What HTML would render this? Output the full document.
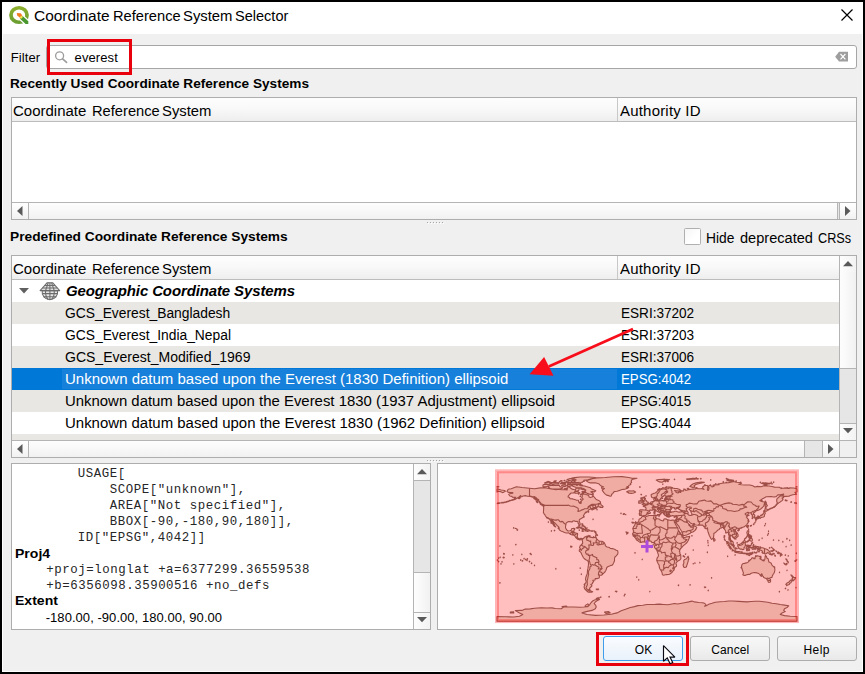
<!DOCTYPE html>
<html><head><meta charset="utf-8"><title>Coordinate Reference System Selector</title>
<style>
html,body{margin:0;padding:0;}
body{width:865px;height:674px;background:#000;position:relative;overflow:hidden;font-family:"Liberation Sans",sans-serif;color:#000;}
.abs,.t,div{position:absolute;box-sizing:border-box;}
.t{white-space:pre;line-height:40px;height:40px;display:block;}
.t .wd{position:static;display:inline-block;transform-origin:0 0;white-space:pre;}
.b{font-weight:bold;}
.m{font-family:"Liberation Mono",monospace;color:#262626;}
.w{color:#fff;}
.hdr{background:linear-gradient(#fdfdfd,#f9f9f9 45%,#eeeeee 100%);border-bottom:1px solid #bcbcbc;}
.sbtn{background:linear-gradient(#ffffff,#f2f2f2);}
.thumbh{background:linear-gradient(#fdfdfd,#f9f9f9 40%,#f1f1f1);}
.thumbv{background:linear-gradient(90deg,#fdfdfd,#f9f9f9 40%,#f1f1f1);}
.btn{border:1px solid #adadad;border-radius:3px;background:linear-gradient(#f7f7f7,#f1f1f1 50%,#e9e9e9);}
svg{position:absolute;overflow:visible;}
</style></head><body>

<div style="left:2px;top:2px;width:861px;height:670px;background:#fff;"></div>
<div style="left:3px;top:34px;width:859px;height:637px;background:#f0f0f0;"></div>
<svg style="left:0;top:0" width="40" height="34" viewBox="0 0 40 34">
<defs><linearGradient id="qg" x1="0" y1="0" x2="0" y2="1"><stop offset="0" stop-color="#8cae2c"/><stop offset="1" stop-color="#6c9f31"/></linearGradient></defs>
<ellipse cx="19" cy="15" rx="8.05" ry="7.25" fill="none" stroke="url(#qg)" stroke-width="3.7"/>
<path d="M21.5 17.5 L30 25.6" stroke="#fff" stroke-width="6.4" fill="none"/>
<path d="M19.8 18.4 L22.6 15.9 L28.3 21.2 L28.3 24.1 L25.6 24.1 Z" fill="#4a9830"/>
<path d="M16.8 13 L20.6 13.3 L22.4 15.6 L20.2 18 L17.2 15.4 Z" fill="#f07c22"/>
<path d="M21.4 15.6 L23 17.1 L21 18.9 L19.7 17.6 Z" fill="#f4e04a"/>
</svg>
<span class="t " style="left:33.5px;top:-4.34px;font-size:15.4px;"><span class="wd" style="transform:scaleX(1.0032);width:75.02px;">Coordinate</span> <span class="wd" style="transform:scaleX(0.9526);width:65.52px;">Reference</span> <span class="wd" style="transform:scaleX(0.9643);width:47.72px;">System</span> <span class="wd" style="transform:scaleX(0.9448);">Selector</span></span>
<svg style="left:840px;top:8px" width="14" height="14"><path d="M1.5 1.5 L12.5 12.5 M12.5 1.5 L1.5 12.5" stroke="#000" stroke-width="1.2" fill="none"/></svg>
<span class="t " style="left:10.8px;top:37.5px;font-size:13px;letter-spacing:0.1px;">Filter</span>
<div style="left:46px;top:45px;width:811px;height:24px;background:#fff;border:1px solid #a6a6a6;border-radius:3px;"></div>
<svg style="left:54px;top:50px" width="14" height="14"><circle cx="5.6" cy="5.8" r="4" fill="none" stroke="#9c9c9c" stroke-width="1.3"/><path d="M8.6 8.8 L12.6 12.4" stroke="#9c9c9c" stroke-width="1.6" stroke-linecap="round"/></svg>
<span class="t " style="left:74.6px;top:37.8px;font-size:13px;letter-spacing:0.1px;">everest</span>
<svg style="left:835px;top:51px" width="14" height="11"><path d="M4 0.8 H13 V10.6 H4 L0.2 5.7 Z" fill="#9e9e9e"/><path d="M5.5 3 L10.4 8.4 M10.4 3 L5.5 8.4" stroke="#fff" stroke-width="1.15"/></svg>
<div style="left:47px;top:39px;width:85px;height:36px;border:3px solid #e8000c;"></div>
<span class="t b" style="left:10.3px;top:64.34px;font-size:12px;transform:scaleX(1.135);transform-origin:0 0;">Recently Used Coordinate Reference Systems</span>
<div style="left:11px;top:97px;width:846px;height:123px;background:#fff;border:1px solid #adadad;"></div>
<div class="hdr" style="left:12px;top:98px;width:844px;height:24px;"></div>
<div style="left:617px;top:98px;width:1px;height:23px;background:#c8c8c8;"></div>
<span class="t " style="left:13.4px;top:90.96px;font-size:15.4px;"><span class="wd" style="transform:scaleX(0.974);width:73.92px;">Coordinate</span> <span class="wd" style="transform:scaleX(0.9545);width:65.72px;">Reference</span> <span class="wd" style="transform:scaleX(0.9643);">System</span></span>
<span class="t " style="left:620px;top:90.96px;font-size:15.4px;letter-spacing:0.205px;transform:scaleX(0.974);transform-origin:0 0;">Authority ID</span>
<div style="left:12px;top:202px;width:844px;height:17px;background:#e6e6e6;border-top:1px solid #b4b4b4;"></div><div class="sbtn" style="left:12px;top:203px;width:17px;height:16px;border-right:1px solid #b4b4b4;"></div><div class="thumbh" style="left:29px;top:203px;width:809px;height:16px;border-right:1px solid #b4b4b4;"></div><div class="sbtn" style="left:839px;top:203px;width:17px;height:16px;border-left:1px solid #b4b4b4;"></div><svg style="left:17px;top:206px" width="6" height="10"><path d="M5.5 0 V10 L0 5 Z" fill="#5a5a5a"/></svg>
<svg style="left:845px;top:205.7px" width="6" height="10"><path d="M0 0 V10 L5.5 5 Z" fill="#5a5a5a"/></svg>
<span class="t b" style="left:10.3px;top:217.34px;font-size:12px;transform:scaleX(1.144);transform-origin:0 0;">Predefined Coordinate Reference Systems</span>
<div style="left:684px;top:228px;width:17px;height:17px;background:linear-gradient(135deg,#f6f6f6,#ffffff 60%);border:1px solid #b0b0b0;border-radius:1.5px;"></div>
<span class="t " style="left:706.3px;top:218.16px;font-size:15.4px;"><span class="wd" style="transform:scaleX(0.8961);width:29.52px;">Hide</span> <span class="wd" style="transform:scaleX(0.9477);width:73.42px;">deprecated</span> <span class="wd" style="transform:scaleX(0.8231);">CRSs</span></span>
<div style="left:11px;top:255px;width:846px;height:203px;background:#fff;border:1px solid #adadad;"></div>
<div class="hdr" style="left:12px;top:256px;width:827px;height:24px;"></div>
<div style="left:617px;top:256px;width:1px;height:23px;background:#c8c8c8;"></div>
<span class="t " style="left:13.4px;top:248.96px;font-size:15.4px;"><span class="wd" style="transform:scaleX(0.974);width:73.92px;">Coordinate</span> <span class="wd" style="transform:scaleX(0.9545);width:65.72px;">Reference</span> <span class="wd" style="transform:scaleX(0.9643);">System</span></span>
<span class="t " style="left:620px;top:248.96px;font-size:15.4px;letter-spacing:0.205px;transform:scaleX(0.974);transform-origin:0 0;">Authority ID</span>
<div style="left:12px;top:302px;width:827px;height:22px;background:#e9e7e3;"></div>
<div style="left:12px;top:346px;width:827px;height:22px;background:#e9e7e3;"></div>
<div style="left:12px;top:368px;width:827px;height:22px;background:#0078d7;"></div>
<div style="left:62px;top:369px;width:555px;height:20px;background:#1780da;"></div>
<div style="left:12px;top:390px;width:827px;height:22px;background:#e9e7e3;"></div>
<div style="left:12px;top:434px;width:827px;height:6px;background:#e9e7e3;"></div>
<svg style="left:19px;top:288px" width="11" height="6"><path d="M0 0 H10 L5 5.5 Z" fill="#606060"/></svg>
<svg style="left:39px;top:282px" width="22" height="19" viewBox="0 0 22 19">
<g fill="none" stroke="#6c6c6c" stroke-width="1.05" stroke-linejoin="round">
<path d="M3.2 8.6 A7.8 7.8 0 1 0 18.6 8.6 Z" fill="#e6e6e6"/>
<path d="M8.2 0.7 H13.6 L20.7 8.6 H1.1 Z" fill="#dedede"/>
<path d="M10.9 0.7 V17.8 M9.2 0.7 L6.6 8.6 Q6 13.8 9.2 17.6 M12.6 0.7 L15.2 8.6 Q15.8 13.8 12.6 17.6 M5.8 3.4 H16 M3.6 6 H18.2 M3.3 11.6 H18.5 M4.6 14.7 H17.2"/>
</g></svg>
<span class="t b" style="left:66px;top:270.66px;font-size:15.4px;letter-spacing:-0.123px;transform:scaleX(0.974);transform-origin:0 0;font-style:italic;">Geographic Coordinate Systems</span>
<span class="t " style="left:64.5px;top:293.16px;font-size:15.4px;transform:scaleX(0.8981);transform-origin:0 0;">GCS_Everest_Bangladesh</span>
<span class="t " style="left:621px;top:293.16px;font-size:15.4px;transform:scaleX(0.8815);transform-origin:0 0;">ESRI:37202</span>
<span class="t " style="left:64.5px;top:315.16px;font-size:15.4px;transform:scaleX(0.8981);transform-origin:0 0;">GCS_Everest_India_Nepal</span>
<span class="t " style="left:621px;top:315.16px;font-size:15.4px;transform:scaleX(0.8815);transform-origin:0 0;">ESRI:37203</span>
<span class="t " style="left:64.5px;top:337.16px;font-size:15.4px;transform:scaleX(0.9107);transform-origin:0 0;">GCS_Everest_Modified_1969</span>
<span class="t " style="left:621px;top:337.16px;font-size:15.4px;transform:scaleX(0.8815);transform-origin:0 0;">ESRI:37006</span>
<span class="t w" style="left:64.5px;top:359.16px;font-size:15.4px;transform:scaleX(0.974);transform-origin:0 0;">Unknown datum based upon the Everest (1830 Definition) ellipsoid</span>
<span class="t w" style="left:621px;top:359.16px;font-size:15.4px;transform:scaleX(0.862);transform-origin:0 0;">EPSG:4042</span>
<span class="t " style="left:64.5px;top:381.16px;font-size:15.4px;transform:scaleX(0.9692);transform-origin:0 0;">Unknown datum based upon the Everest 1830 (1937 Adjustment) ellipsoid</span>
<span class="t " style="left:621px;top:381.16px;font-size:15.4px;transform:scaleX(0.862);transform-origin:0 0;">EPSG:4015</span>
<span class="t " style="left:64.5px;top:403.16px;font-size:15.4px;transform:scaleX(0.9721);transform-origin:0 0;">Unknown datum based upon the Everest 1830 (1962 Definition) ellipsoid</span>
<span class="t " style="left:621px;top:403.16px;font-size:15.4px;transform:scaleX(0.862);transform-origin:0 0;">EPSG:4044</span>
<div style="left:839px;top:256px;width:17px;height:184px;background:#e6e6e6;border-left:1px solid #b4b4b4;"></div><div class="thumbv" style="left:840px;top:256px;width:16px;height:17px;border-bottom:1px solid #b4b4b4;background:linear-gradient(90deg,#fdfdfd,#f3f3f3)"></div><div class="thumbv" style="left:840px;top:272px;width:16px;height:97px;border-bottom:1px solid #b4b4b4;"></div><div class="thumbv" style="left:840px;top:423px;width:16px;height:17px;border-top:1px solid #b4b4b4;background:linear-gradient(90deg,#fdfdfd,#f3f3f3)"></div><svg style="left:842.6px;top:260.7px" width="10" height="6"><path d="M0 5.2 H10 L5 0 Z" fill="#595959"/></svg><svg style="left:842.6px;top:428.2px" width="10" height="6"><path d="M0 0 H10 L5 5.2 Z" fill="#595959"/></svg>
<div style="left:12px;top:440px;width:844px;height:17px;background:#e6e6e6;border-top:1px solid #b4b4b4;"></div><div class="sbtn" style="left:12px;top:441px;width:17px;height:16px;border-right:1px solid #b4b4b4;"></div><div class="thumbh" style="left:29px;top:441px;width:776px;height:16px;border-right:1px solid #b4b4b4;"></div><div class="sbtn" style="left:822px;top:441px;width:34px;height:16px;border-left:1px solid #b4b4b4;"></div><svg style="left:17px;top:444px" width="6" height="10"><path d="M5.5 0 V10 L0 5 Z" fill="#5a5a5a"/></svg>
<svg style="left:828px;top:444px" width="6" height="10"><path d="M0 0 V10 L5.5 5 Z" fill="#5a5a5a"/></svg>
<div style="left:839px;top:440px;width:17px;height:17px;background:#f0f0f0;border-left:1px solid #b4b4b4;border-top:1px solid #b4b4b4;"></div>
<svg style="left:0;top:0" width="865" height="674"><path d="M633 329 L548.8 366.4" stroke="#f80d1a" stroke-width="2.7" fill="none"/><path d="M529.6 374.2 L544.1 356.9 L553.5 375.8 Z" fill="#f80d1a"/></svg>
<div style="left:427px;top:460px;width:1px;height:1px;background:#a6a6a6;"></div><div style="left:428px;top:461px;width:1px;height:1px;background:#fff;"></div>
<div style="left:430px;top:460px;width:1px;height:1px;background:#a6a6a6;"></div><div style="left:431px;top:461px;width:1px;height:1px;background:#fff;"></div>
<div style="left:433px;top:460px;width:1px;height:1px;background:#a6a6a6;"></div><div style="left:434px;top:461px;width:1px;height:1px;background:#fff;"></div>
<div style="left:436px;top:460px;width:1px;height:1px;background:#a6a6a6;"></div><div style="left:437px;top:461px;width:1px;height:1px;background:#fff;"></div>
<div style="left:439px;top:460px;width:1px;height:1px;background:#a6a6a6;"></div><div style="left:440px;top:461px;width:1px;height:1px;background:#fff;"></div>
<div style="left:442px;top:460px;width:1px;height:1px;background:#a6a6a6;"></div><div style="left:443px;top:461px;width:1px;height:1px;background:#fff;"></div>
<div style="left:427px;top:222px;width:1px;height:1px;background:#a6a6a6;"></div><div style="left:428px;top:223px;width:1px;height:1px;background:#fff;"></div>
<div style="left:430px;top:222px;width:1px;height:1px;background:#a6a6a6;"></div><div style="left:431px;top:223px;width:1px;height:1px;background:#fff;"></div>
<div style="left:433px;top:222px;width:1px;height:1px;background:#a6a6a6;"></div><div style="left:434px;top:223px;width:1px;height:1px;background:#fff;"></div>
<div style="left:436px;top:222px;width:1px;height:1px;background:#a6a6a6;"></div><div style="left:437px;top:223px;width:1px;height:1px;background:#fff;"></div>
<div style="left:439px;top:222px;width:1px;height:1px;background:#a6a6a6;"></div><div style="left:440px;top:223px;width:1px;height:1px;background:#fff;"></div>
<div style="left:442px;top:222px;width:1px;height:1px;background:#a6a6a6;"></div><div style="left:443px;top:223px;width:1px;height:1px;background:#fff;"></div>
<div style="left:11px;top:463px;width:420px;height:167px;background:#fff;border:1px solid #adadad;"></div>
<span class="t m" style="left:13.8px;top:454.1px;font-size:12.4px;letter-spacing:0.56px;">        USAGE[</span>
<span class="t m" style="left:13.8px;top:469.7px;font-size:12.4px;letter-spacing:0.56px;">            SCOPE[&quot;unknown&quot;],</span>
<span class="t m" style="left:13.8px;top:485.7px;font-size:12.4px;letter-spacing:0.56px;">            AREA[&quot;Not specified&quot;],</span>
<span class="t m" style="left:13.8px;top:501.7px;font-size:12.4px;letter-spacing:0.56px;">            BBOX[-90,-180,90,180]],</span>
<span class="t m" style="left:13.8px;top:517.7px;font-size:12.4px;letter-spacing:0.56px;">        ID[&quot;EPSG&quot;,4042]]</span>
<span class="t b" style="left:15.3px;top:533.64px;font-size:12px;transform:scaleX(1.17);transform-origin:0 0;">Proj4</span>
<span class="t m" style="left:46.2px;top:549.7px;font-size:12.4px;letter-spacing:0.56px;">+proj=longlat +a=6377299.36559538</span>
<span class="t m" style="left:46.2px;top:565.7px;font-size:12.4px;letter-spacing:0.56px;">+b=6356098.35900516 +no_defs</span>
<span class="t b" style="left:15.3px;top:581.44px;font-size:12px;transform:scaleX(1.17);transform-origin:0 0;">Extent</span>
<span class="t " style="left:45.7px;top:597.8px;font-size:13px;letter-spacing:0.05px;">-180.00, -90.00, 180.00, 90.00</span>
<div style="left:413px;top:464px;width:17px;height:165px;background:#e6e6e6;border-left:1px solid #b4b4b4;"></div><div class="thumbv" style="left:414px;top:464px;width:16px;height:17px;border-bottom:1px solid #b4b4b4;background:linear-gradient(90deg,#fdfdfd,#f3f3f3)"></div><div class="thumbv" style="left:414px;top:572px;width:16px;height:40px;border-top:1px solid #b4b4b4;"></div><div class="thumbv" style="left:414px;top:612px;width:16px;height:17px;border-top:1px solid #b4b4b4;background:linear-gradient(90deg,#fdfdfd,#f3f3f3)"></div><svg style="left:416.6px;top:468.7px" width="10" height="6"><path d="M0 5.2 H10 L5 0 Z" fill="#595959"/></svg><svg style="left:416.6px;top:617.4px" width="10" height="6"><path d="M0 0 H10 L5 5.2 Z" fill="#595959"/></svg>
<div style="left:437px;top:463px;width:420px;height:167px;background:#fff;border:1px solid #adadad;"></div>
<svg style="left:0;top:0" width="865" height="674" viewBox="0 0 865 674">
<rect x="497" y="471.3" width="300" height="149.8" fill="#ffbfbf"/>
<g id="world" stroke-linejoin="round">
<path d="M507.0,491.5 508.2,489.3 511.2,488.7 516.5,486.8 522.0,487.5 529.5,488.2 534.5,488.7 540.3,487.9 542.8,487.9 546.2,488.0 551.2,488.9 556.2,489.7 557.0,489.1 562.0,489.7 565.3,489.5 567.0,490.1 567.4,488.7 568.2,486.3 569.9,487.5 570.8,488.3 572.0,489.1 573.7,489.5 575.3,490.0 576.2,488.0 578.7,488.1 579.2,489.1 578.7,490.4 577.0,491.0 575.3,491.2 574.5,492.0 573.7,492.9 571.2,493.0 569.5,494.5 568.2,496.2 568.1,497.2 569.5,497.3 569.9,498.7 572.8,498.9 576.2,500.1 578.4,500.3 578.7,502.0 579.9,503.5 581.2,503.3 581.2,501.2 583.2,499.1 581.6,497.3 582.4,496.2 582.0,494.2 585.3,494.3 588.7,495.4 589.1,497.0 590.3,497.5 592.0,497.0 593.2,496.0 594.9,497.9 596.2,499.5 598.7,500.5 600.3,501.6 600.6,502.9 598.7,503.5 597.0,504.3 593.7,504.4 591.6,504.4 589.5,505.8 587.8,507.1 590.3,505.8 592.8,505.2 593.4,505.5 592.8,506.4 593.0,507.5 594.1,507.9 595.8,508.1 596.2,508.5 594.1,509.0 592.0,510.0 591.8,509.1 593.2,508.5 591.2,508.6 589.5,509.4 588.5,509.9 588.1,510.8 588.7,511.5 587.4,511.8 585.3,512.4 585.2,513.3 584.4,513.9 583.8,515.2 583.4,515.4 583.7,517.0 582.8,517.5 582.0,518.0 580.8,518.7 579.5,519.5 579.2,520.8 579.9,522.9 580.3,524.1 580.0,525.2 579.3,525.2 578.7,524.1 578.0,522.9 578.0,521.9 577.0,521.2 575.8,521.5 574.5,520.9 572.8,521.0 572.4,521.9 571.2,521.9 569.1,521.5 567.8,521.9 566.2,523.0 565.9,524.5 565.6,526.2 565.5,527.6 566.0,528.9 567.0,530.2 568.1,531.0 569.9,530.7 571.2,530.4 571.6,528.7 573.7,528.3 574.7,528.5 574.1,530.0 573.8,531.0 573.4,532.0 573.0,533.0 574.1,533.0 575.3,533.0 577.0,533.2 577.7,533.7 577.4,535.4 577.2,537.0 577.8,537.9 578.7,538.7 579.5,538.9 580.8,538.2 582.0,538.5 582.6,539.0 582.1,540.2 581.6,539.3 580.8,538.8 580.1,540.0 579.1,539.8 577.8,539.3 577.2,538.7 576.2,538.0 575.5,537.1 574.5,535.5 573.9,535.1 572.4,535.0 570.8,534.5 570.1,534.0 568.7,532.8 567.4,533.0 566.2,533.0 564.5,532.4 562.4,531.6 560.8,530.9 559.5,530.0 559.1,529.1 559.2,528.3 558.7,527.0 557.0,525.4 555.9,524.1 554.9,523.0 553.7,522.1 552.8,520.4 551.3,519.7 551.6,520.8 552.8,522.5 554.1,524.1 555.1,526.0 555.8,527.0 555.1,526.8 553.7,525.6 553.2,524.3 551.8,523.3 551.6,522.0 550.6,521.0 549.7,519.5 549.2,518.7 548.2,517.9 546.5,517.4 545.4,515.7 544.9,514.8 543.8,513.3 543.4,512.5 543.5,511.2 543.6,509.5 543.7,507.7 543.1,505.9 544.5,505.8 544.7,505.2 543.2,504.5 541.2,503.7 540.3,502.5 538.7,501.0 537.4,500.0 535.8,498.3 534.1,497.2 532.4,497.0 530.3,496.4 527.4,496.2 525.3,495.6 523.2,496.0 522.0,496.6 520.3,497.0 520.8,495.5 519.9,496.2 518.7,497.2 516.6,498.5 514.9,499.5 512.8,500.2 510.8,500.5 512.0,499.8 513.7,499.3 515.3,498.0 515.8,497.3 514.5,497.4 512.4,497.2 512.0,496.4 509.9,496.0 509.1,495.0 508.7,494.4 509.7,493.7 512.8,493.3 512.8,492.5 511.2,492.5 508.7,492.4ZM592.0,494.6 587.8,493.8 585.8,492.5 582.4,492.6 582.0,491.6 585.3,491.6 585.8,490.0 584.5,489.1 581.6,487.9 578.7,487.9 576.2,487.5 572.8,486.2 572.0,484.8 576.2,484.8 579.5,484.8 580.3,485.8 584.5,486.0 587.8,487.0 590.3,487.7 591.2,488.7 595.3,490.4 595.8,490.7 594.1,492.0 592.8,491.4 590.8,491.8 593.2,493.5ZM562.4,488.3 559.5,489.1 555.3,489.0 550.3,488.7 548.2,486.8 549.5,485.5 552.0,485.1 555.3,485.5 559.1,485.1 559.9,486.6 562.8,487.5ZM542.8,486.2 544.1,486.9 546.2,486.7 548.7,485.8 550.8,485.1 549.1,484.4 545.8,484.1 543.2,484.7ZM582.4,482.5 580.3,482.7 572.4,482.5 575.3,481.2 574.1,480.8 576.2,480.0 574.9,479.1 571.2,478.3 574.5,477.6 580.3,477.0 588.7,477.0 595.3,477.5 595.8,478.0 591.2,478.7 587.8,479.7 583.7,480.4 584.5,481.2 582.0,482.0ZM567.0,479.5 571.2,481.0 574.1,480.0 570.3,478.5ZM570.8,484.0 580.3,484.0 580.8,483.3 578.7,482.6 572.8,482.6 569.5,482.2 566.6,482.1 569.9,483.1ZM567.4,486.1 570.3,486.2 572.0,485.4 571.2,484.5 567.4,484.6ZM561.6,485.5 564.5,486.8 566.6,485.8 565.3,484.7 562.8,485.0ZM549.5,483.3 552.8,484.2 558.7,483.7 558.7,482.9 555.3,482.5 552.0,482.6 549.5,482.8ZM560.3,483.7 565.3,483.7 565.8,482.6 562.0,482.2ZM544.5,482.9 550.3,482.0 547.8,481.4ZM574.5,491.8 577.0,491.3 579.9,492.9 578.7,493.2 574.9,493.2ZM564.1,488.7 567.0,488.0 567.4,489.0 565.3,489.0ZM597.6,506.5 600.3,507.1 602.8,507.4 603.1,506.5 602.4,505.8 601.2,505.1 600.5,503.3 599.1,504.1 598.2,505.4ZM540.1,503.9 542.8,504.5 544.2,505.9 542.8,505.7 540.8,504.5ZM536.2,501.1 537.2,501.2 537.7,502.7 536.6,502.0ZM576.2,528.0 577.8,527.0 579.9,527.0 582.8,528.3 585.2,529.4 582.4,529.6 582.0,529.0 580.8,528.1 578.7,527.5 577.0,528.0ZM584.9,530.9 586.3,529.6 588.8,529.8 590.0,530.7 588.7,531.0 587.4,531.5 586.6,531.0ZM581.8,531.0 582.8,530.8 583.5,531.2 582.4,531.4ZM591.0,530.9 592.2,530.9 592.2,531.2 591.0,531.2ZM586.2,480.8 590.3,479.5 592.0,478.7 597.0,477.9 605.3,477.5 613.7,476.7 622.0,476.6 628.7,477.5 632.0,478.3 637.0,478.3 632.0,479.5 631.2,481.2 631.6,482.5 630.3,483.7 630.8,484.5 628.7,485.4 628.7,486.2 627.0,486.6 628.7,487.5 626.2,487.9 627.8,488.3 625.3,489.1 622.0,489.5 619.5,490.4 617.0,491.3 614.1,491.6 612.8,493.3 611.6,494.5 611.2,496.0 609.9,496.3 608.7,495.6 606.6,495.1 605.3,494.1 604.1,492.9 602.8,491.2 602.2,490.0 604.5,488.5 601.6,488.3 601.6,487.3 603.7,487.0 600.8,485.8 598.7,483.7 595.3,482.7 590.3,482.9 587.8,481.9ZM626.8,491.5 628.7,490.9 632.0,491.0 633.7,490.8 634.9,491.6 635.6,492.0 633.7,493.0 631.2,493.4 628.2,493.0 628.7,492.5 627.0,492.1ZM517.0,529.4 517.8,529.7 517.3,530.4 517.0,529.9ZM515.2,528.2 515.6,528.4 515.3,528.5ZM516.4,528.7 517.0,528.9 516.7,529.0ZM582.6,539.0 583.7,538.5 584.1,537.5 584.9,537.0 586.6,536.2 587.4,535.9 587.4,537.0 587.0,537.9 587.8,537.2 588.7,536.1 589.9,537.2 592.0,537.4 593.2,537.7 595.3,537.3 596.2,538.0 597.0,539.1 598.2,540.4 599.5,541.2 601.2,541.3 602.8,541.6 604.1,542.5 605.3,544.7 605.3,545.8 606.6,546.6 607.0,547.0 609.5,547.5 610.3,548.5 612.4,548.6 614.5,549.3 616.2,550.2 617.7,550.8 618.0,552.5 617.7,554.1 616.2,555.8 614.9,557.0 614.5,558.7 614.5,560.8 613.8,562.5 613.0,564.1 612.2,565.3 610.8,565.4 609.5,566.0 608.2,566.5 606.8,567.5 606.4,569.1 605.8,570.4 604.9,572.0 603.7,573.1 602.4,574.5 601.3,575.3 599.9,575.3 598.4,574.5 599.3,576.2 599.5,577.0 599.0,578.0 597.0,578.6 595.2,578.6 595.1,580.0 592.8,580.4 593.7,581.6 592.7,582.5 592.4,583.7 590.8,584.5 592.0,585.8 590.8,587.0 589.5,588.3 590.0,589.8 588.7,590.0 587.8,591.0 587.0,590.8 585.8,590.0 584.5,588.7 584.1,586.6 584.9,585.0 584.1,584.5 585.8,582.9 586.2,581.2 585.5,579.5 585.8,577.5 586.4,575.8 587.2,574.1 587.4,572.0 587.5,570.4 587.9,568.7 588.2,566.6 588.5,564.5 588.4,562.5 588.3,561.5 587.4,560.6 585.8,559.8 584.1,558.5 583.3,557.5 582.7,556.2 581.8,554.5 581.2,553.0 580.4,551.9 579.4,551.2 579.2,550.0 580.1,549.0 580.3,548.3 579.5,548.0 579.7,547.0 580.2,546.0 580.3,545.4 581.2,545.0 581.6,544.1 582.4,544.0 582.7,542.9 582.5,541.6 582.4,540.6 582.1,540.2ZM589.8,590.0 590.2,590.8 592.7,591.8 591.6,592.1 589.9,592.3 588.7,592.2 587.0,591.4 588.2,591.0 588.4,590.2ZM596.2,589.1 598.7,589.0 598.2,589.7 596.6,589.7ZM595.5,537.3 596.2,537.3 596.2,537.8 595.5,537.8ZM642.1,516.4 642.6,516.3 644.5,516.8 645.3,517.0 647.0,516.3 648.2,515.8 649.5,515.5 651.2,515.5 653.2,515.4 655.2,515.1 656.2,515.4 655.8,516.0 655.9,516.6 655.3,517.9 655.5,518.0 656.3,518.5 657.8,518.8 659.7,519.3 660.1,520.0 661.6,520.5 663.0,521.0 663.7,520.4 663.8,519.3 664.9,518.8 666.3,519.1 667.8,519.9 669.9,520.2 671.2,520.5 672.0,520.1 673.2,520.0 673.9,520.2 675.5,520.1 676.1,521.6 675.7,522.9 674.9,522.6 674.2,521.3 674.2,522.0 674.9,523.0 675.3,524.0 676.2,525.5 676.8,526.6 677.8,527.9 678.1,528.7 678.0,530.0 679.1,531.2 679.9,533.3 681.2,534.1 682.4,535.4 683.1,535.8 682.8,536.6 683.7,537.5 684.9,537.5 686.2,536.9 687.8,536.8 689.7,536.4 689.5,537.5 688.9,538.7 688.1,540.8 687.0,542.5 685.3,544.1 683.7,545.4 682.4,546.6 681.6,547.7 680.5,548.5 680.1,549.7 679.3,551.2 679.9,552.0 679.8,553.7 680.7,554.9 680.8,556.6 680.9,558.7 679.9,560.0 677.8,561.0 676.2,562.7 675.9,563.7 676.6,565.0 676.4,566.2 674.9,567.2 674.3,567.9 674.4,568.7 674.0,570.0 672.8,571.2 672.0,572.5 670.6,573.5 669.5,574.3 668.4,574.5 666.6,574.6 665.3,574.7 663.7,575.2 662.4,574.8 662.2,573.5 662.0,572.5 661.2,570.8 660.7,570.0 659.7,568.5 659.3,567.0 659.1,565.1 658.2,563.7 657.4,562.0 656.8,560.6 656.8,559.5 657.2,557.9 658.2,556.5 658.5,555.2 658.0,553.7 657.2,551.3 657.0,550.4 656.2,549.4 655.1,548.1 654.3,546.9 654.8,545.8 655.2,544.1 655.0,543.3 654.4,542.5 652.8,542.5 652.0,542.6 651.2,541.5 650.6,541.0 649.2,540.9 648.0,541.1 646.6,541.7 645.3,542.2 644.3,542.0 642.8,541.9 640.8,542.5 639.3,541.9 638.0,540.9 637.4,540.5 636.6,540.0 636.0,539.1 635.8,538.3 634.8,537.3 634.5,537.0 634.1,536.3 633.1,535.9 633.0,535.0 632.4,534.0 633.2,532.9 633.4,531.6 633.6,530.4 633.2,530.0 632.8,528.7 633.2,527.6 633.7,526.5 634.6,525.6 634.9,524.5 636.0,523.1 637.4,522.5 638.7,521.6 638.9,520.8 638.8,520.0 639.3,519.1 640.8,518.2 641.4,517.7ZM688.1,556.2 688.9,559.0 688.3,559.5 688.2,561.2 687.4,563.7 686.3,567.0 684.7,567.5 683.7,567.0 683.1,565.0 683.9,562.9 683.7,560.8 684.5,559.5 685.6,559.3 686.8,558.3 687.7,556.8ZM632.9,522.5 633.6,522.4 633.3,522.9ZM633.8,522.8 634.2,522.8 634.1,523.1ZM635.1,522.4 635.5,522.3 635.3,522.8ZM693.1,563.6 693.5,563.8 693.2,564.0ZM694.8,562.9 695.2,563.0 694.9,563.3ZM691.4,535.7 692.4,535.7 692.0,536.0ZM683.1,555.8 683.2,556.1 683.0,556.1ZM627.2,533.5 627.5,533.5 627.4,533.8ZM625.9,532.0 626.2,532.0 626.1,532.2ZM625.5,514.6 626.0,514.7 625.8,514.8ZM632.7,518.9 633.1,518.9 632.9,519.0ZM675.5,520.1 676.1,518.9 676.6,518.0 676.9,516.6 677.2,515.7 676.2,515.6 674.9,516.1 673.7,515.8 672.5,515.5 671.6,516.0 670.3,515.6 669.8,515.4 668.9,514.3 669.3,513.4 668.8,512.9 669.9,512.5 671.2,512.5 671.2,512.0 673.2,511.9 674.9,511.2 676.2,511.2 677.4,511.8 679.1,512.1 680.3,512.0 681.6,511.6 681.6,510.8 680.3,510.0 679.1,509.2 678.2,508.7 678.8,507.9 679.7,507.0 678.2,507.2 676.4,507.6 676.2,508.1 677.4,508.5 676.4,508.7 675.3,509.2 674.8,509.0 674.2,508.4 675.0,507.8 674.1,507.8 673.2,507.4 672.6,507.5 671.8,508.5 670.8,509.5 670.3,510.1 670.2,510.8 670.3,511.3 671.2,511.9 670.3,512.0 669.5,512.4 668.8,512.6 668.7,512.2 667.4,512.1 666.8,512.7 666.0,512.5 665.9,513.3 666.4,513.9 667.0,514.5 666.2,514.6 666.3,515.8 665.6,515.8 665.1,515.5 664.7,514.5 664.5,513.7 663.7,513.1 663.2,512.5 663.2,511.5 662.4,510.8 661.2,510.3 659.9,509.5 659.1,508.5 658.4,508.5 658.4,508.1 657.2,508.5 657.3,509.3 658.3,510.0 658.8,510.9 660.3,511.3 662.4,512.7 661.2,512.5 660.8,513.1 661.2,513.7 660.8,514.1 660.1,514.5 660.3,513.9 660.1,512.9 659.1,512.3 657.8,511.8 657.2,511.4 656.2,510.8 655.6,510.0 654.9,509.3 654.3,509.2 653.2,509.7 652.2,510.3 651.0,510.0 649.9,510.1 649.5,510.8 649.7,511.3 648.8,511.7 647.7,512.2 646.8,513.3 647.2,513.9 646.4,514.8 645.3,515.5 643.3,515.6 642.5,516.1 641.8,515.7 640.8,515.2 639.6,515.4 639.7,514.1 639.1,513.9 639.6,512.7 639.8,511.6 639.3,510.4 640.3,509.8 642.4,509.9 644.1,510.0 645.5,510.0 646.0,509.0 646.1,508.2 645.2,507.0 643.4,506.4 643.1,505.9 644.5,505.5 645.7,505.6 645.5,504.8 647.1,505.0 648.2,504.4 648.4,503.8 649.9,503.4 650.5,502.8 651.0,502.0 652.0,501.7 653.0,501.5 654.2,501.5 654.2,500.9 653.8,499.9 653.8,498.7 655.8,498.1 655.6,499.1 655.3,500.0 655.2,500.5 656.2,500.9 657.4,500.9 658.8,501.3 660.8,500.8 662.4,500.6 663.5,500.9 664.5,500.0 664.5,498.7 665.8,498.2 667.2,498.5 666.6,497.5 666.6,496.9 667.8,496.6 670.3,496.5 672.2,496.3 670.8,495.8 668.7,495.9 666.2,496.3 664.8,495.5 664.9,494.1 665.8,493.2 667.8,492.0 667.2,491.4 665.3,491.6 664.5,492.7 662.4,493.9 661.3,495.0 661.6,495.8 662.7,496.4 662.0,497.0 660.8,498.3 660.3,499.4 658.9,500.0 657.8,500.0 657.4,499.1 656.8,498.1 656.2,497.0 654.9,497.2 653.7,497.8 652.4,497.8 651.6,497.0 651.2,495.8 651.2,494.5 652.4,493.9 654.1,493.3 655.3,492.9 656.6,492.0 657.4,491.0 658.7,490.0 659.9,489.3 661.6,488.5 662.8,488.0 664.9,487.7 666.6,487.2 668.5,487.0 670.3,487.0 672.4,487.6 672.8,488.0 674.5,488.4 677.0,488.5 679.1,489.3 681.0,490.4 681.3,490.8 679.5,491.1 676.2,490.7 674.5,490.5 675.8,491.4 676.2,492.5 678.2,493.0 678.5,492.0 680.8,492.4 680.3,491.4 682.4,490.9 683.7,491.0 683.9,489.7 683.7,489.1 685.3,489.4 685.8,490.5 687.4,489.9 691.2,489.3 692.8,489.1 695.3,488.9 697.4,488.1 697.8,488.8 700.8,488.8 702.0,488.6 702.8,488.9 704.1,489.4 702.7,488.3 702.7,487.0 704.5,485.5 707.4,485.5 707.8,486.6 707.7,488.7 707.4,490.0 708.2,490.5 708.7,489.5 709.1,487.9 708.2,486.6 709.1,485.5 711.6,486.0 712.0,487.0 714.1,486.2 714.1,484.9 719.1,484.6 719.5,483.7 723.7,483.0 728.7,482.6 733.9,481.5 736.2,482.2 740.3,482.5 741.6,483.3 738.7,484.3 741.2,484.8 745.3,485.0 749.9,485.0 752.8,485.8 754.9,487.0 757.4,486.4 761.2,486.7 763.7,485.8 768.7,486.0 772.0,486.5 774.5,487.1 779.5,487.3 780.8,488.2 783.7,488.1 787.0,487.9 789.1,488.6 789.5,487.9 793.7,488.0 797.0,488.8 797.0,492.0 794.9,492.3 796.6,494.3 792.8,494.7 790.3,495.5 788.9,496.3 785.3,496.4 783.1,496.4 783.1,497.9 782.0,498.0 783.0,499.5 782.4,500.4 780.3,501.9 779.1,502.6 777.6,503.7 776.7,501.2 776.8,499.1 777.8,498.0 780.3,495.8 781.9,495.9 783.4,495.0 783.7,494.1 780.3,494.7 777.8,494.9 776.2,496.6 773.7,497.0 771.2,496.5 766.2,496.8 764.1,497.9 762.0,499.1 759.7,500.6 761.6,501.4 764.1,502.0 764.7,502.7 764.1,504.5 763.9,505.8 762.4,507.5 760.3,509.3 757.8,510.6 757.0,510.2 755.9,511.0 755.1,512.0 753.2,513.0 754.8,515.4 754.8,516.6 753.2,517.3 752.2,517.4 752.4,515.8 752.6,515.0 751.4,514.7 751.2,514.0 751.4,513.3 750.7,512.9 748.7,513.0 748.0,513.9 748.7,512.5 747.8,512.2 746.4,513.0 745.3,513.5 745.1,514.1 746.2,515.1 747.7,514.7 749.2,515.2 747.4,516.0 746.4,517.0 747.4,518.3 748.5,519.7 748.6,520.5 747.8,521.0 748.7,521.4 748.2,522.6 747.2,523.9 746.6,525.0 745.3,525.9 744.3,526.8 742.2,527.5 741.2,527.9 739.5,528.3 739.0,529.3 738.4,528.3 737.2,528.2 736.0,528.9 735.2,530.4 735.8,531.6 737.2,532.9 738.1,535.0 738.0,536.5 736.3,537.5 735.9,538.3 734.5,539.0 734.3,537.9 733.2,537.4 732.4,536.2 731.2,535.6 730.9,535.0 730.3,535.1 730.1,536.6 729.8,538.5 730.6,539.5 731.0,540.5 732.0,541.0 733.2,542.2 733.2,543.9 733.8,545.0 733.2,545.0 731.4,543.9 730.7,541.8 730.3,540.8 729.5,539.7 728.9,539.4 728.9,537.9 729.2,536.2 728.7,534.5 728.3,532.5 727.7,532.2 726.4,533.0 725.6,532.9 725.8,531.4 724.9,529.7 723.9,528.7 723.5,527.5 722.4,527.4 721.2,528.0 719.5,528.5 719.3,529.4 718.0,529.9 716.6,531.4 715.6,532.4 714.5,533.0 713.8,533.5 713.8,535.2 713.6,536.6 713.5,537.6 712.8,538.5 712.2,538.8 711.7,539.5 710.8,538.5 709.9,536.5 709.3,535.4 708.7,533.7 708.1,532.0 707.7,530.4 707.6,528.7 707.4,527.7 707.0,528.5 706.0,528.9 704.5,527.7 705.6,527.0 704.1,526.8 703.1,525.7 702.4,525.0 700.3,525.1 698.3,525.2 696.2,525.0 694.8,524.7 694.3,523.6 692.4,524.0 690.8,523.3 689.5,522.2 688.7,521.0 687.7,521.0 687.0,521.2 687.0,521.7 687.6,522.6 688.7,524.0 688.8,525.0 689.3,525.5 689.7,524.5 690.0,525.4 689.9,526.0 692.0,526.1 693.7,524.5 694.0,525.5 694.5,526.3 695.9,526.5 696.8,527.5 695.8,529.1 695.1,530.4 693.9,531.3 692.8,532.0 691.2,532.4 690.3,533.2 687.8,534.5 686.6,535.0 684.5,535.5 683.2,535.6 682.8,534.5 682.6,533.3 682.4,532.5 681.6,531.2 680.8,530.0 679.7,528.3 679.1,526.6 678.1,525.4 677.0,524.1 676.2,522.8 676.1,521.6ZM497.0,488.8 501.2,490.0 504.5,490.5 505.5,491.1 503.2,492.5 502.4,492.6 500.3,491.6 498.2,491.2 497.0,492.0ZM642.2,504.5 644.1,504.3 645.5,504.0 647.2,504.0 648.2,503.5 647.6,503.3 648.4,502.3 647.2,502.0 646.9,501.5 645.9,500.5 645.7,499.9 644.5,499.5 645.3,498.7 645.5,498.2 643.7,498.1 644.4,497.4 642.8,497.4 642.2,498.3 642.3,499.3 642.9,500.4 644.2,500.5 644.3,501.3 643.2,501.8 643.4,502.6 642.7,503.0 644.3,503.4 643.4,503.7ZM638.7,503.2 640.1,503.1 641.8,502.7 642.0,501.6 642.4,500.7 641.8,500.2 640.3,500.2 639.9,500.9 638.7,501.0 638.9,501.8 639.1,502.4 638.4,502.9ZM657.4,514.5 660.0,514.4 659.6,515.6 657.4,514.9ZM653.8,512.1 655.1,511.9 655.0,513.5 654.1,513.7ZM654.2,510.8 654.9,510.4 654.8,511.6 654.2,511.5ZM666.7,516.6 668.9,516.9 667.4,517.0ZM673.9,517.0 675.8,516.5 675.2,517.1 674.5,517.4ZM649.0,513.2 649.8,513.0 649.6,513.5ZM656.3,499.8 657.4,499.5 657.3,500.2 656.4,500.2ZM662.2,498.5 662.8,498.0 662.7,498.5ZM640.9,494.4 641.6,494.3 641.3,494.7ZM645.8,495.8 646.2,495.7 645.9,496.3ZM656.2,480.0 658.7,479.5 663.7,479.3 669.5,479.5 667.0,480.8 664.5,481.0 662.0,482.3 659.5,481.9 657.8,481.0ZM689.9,486.5 692.8,487.4 694.9,487.3 694.1,485.8 695.8,484.5 699.5,483.5 704.3,482.4 701.2,482.0 696.2,482.9 693.2,483.7 691.2,485.2ZM727.0,480.4 730.3,479.7 733.7,480.4 732.0,481.2 728.7,481.0ZM687.0,479.4 692.8,479.1 697.0,478.7 693.7,478.3 688.7,478.8ZM761.2,483.3 765.3,482.9 770.3,483.5 768.7,483.9 763.7,483.9ZM795.8,487.0 797.0,486.6 797.0,487.1ZM497.0,486.6 499.1,486.8 497.0,487.1ZM765.3,501.0 766.3,502.5 766.4,504.5 767.4,505.4 766.2,507.3 765.3,507.9 765.3,506.2 765.2,503.7 765.1,501.8ZM763.7,511.6 764.5,510.8 766.3,511.2 768.2,510.1 767.4,509.5 765.2,508.3 764.8,510.1 763.8,510.8ZM764.8,511.7 765.3,513.3 764.5,514.7 764.3,516.5 763.4,517.0 762.4,517.3 761.2,517.4 760.2,518.3 759.5,517.4 757.4,517.7 756.2,517.9 756.2,517.5 757.6,516.6 759.8,516.5 761.0,515.1 761.6,515.4 762.8,514.5 763.7,513.0 763.9,511.9ZM755.3,518.3 756.8,518.2 756.6,519.7 755.8,520.2 755.5,519.1 755.1,518.5ZM757.4,517.9 759.1,517.7 758.9,518.2 757.8,518.9 757.2,518.5ZM748.2,525.2 748.6,525.8 747.8,527.9 747.1,527.0 747.7,525.5ZM737.6,530.1 739.1,529.5 739.5,529.9 738.2,531.0ZM713.7,538.0 714.7,539.1 715.2,540.2 714.5,541.0 713.8,541.2 713.5,539.5ZM747.4,530.8 748.8,530.9 748.7,532.7 748.3,534.4 750.3,535.0 750.3,535.7 749.1,535.0 747.8,534.9 747.2,533.9 746.8,532.7 747.2,531.6ZM748.7,540.1 749.9,539.0 751.6,538.1 752.4,539.5 752.2,540.9 751.4,541.2 750.3,540.8 749.5,540.0ZM750.8,535.8 751.7,536.0 751.3,537.6 750.8,537.2ZM748.7,536.4 749.7,536.6 749.7,538.5 749.1,538.0 748.7,537.5ZM744.7,539.2 746.6,537.3 746.6,536.8 745.8,537.9 744.5,539.0ZM747.3,535.0 748.2,535.1 748.0,536.0ZM737.8,544.5 738.9,544.8 739.8,544.2 741.2,543.5 742.4,542.3 743.2,541.6 744.3,540.4 745.1,541.0 746.3,541.9 745.3,542.6 745.2,543.7 745.3,544.4 746.2,545.4 745.2,545.5 744.9,546.8 744.1,547.5 743.9,548.9 743.7,549.5 742.5,549.6 741.6,549.0 740.1,549.1 738.8,548.6 738.7,547.4 737.8,546.4 737.8,545.4ZM726.4,541.5 728.2,541.9 728.9,542.7 730.3,543.9 731.2,544.5 732.2,545.4 733.2,545.8 733.5,547.0 734.2,547.9 735.3,548.6 735.2,550.0 735.2,551.0 734.1,551.0 732.2,549.5 731.2,548.4 730.6,547.0 729.5,546.0 729.2,544.8 728.0,543.5 726.6,542.2ZM734.7,551.9 735.4,551.1 737.4,551.6 739.2,551.5 740.8,552.0 742.4,552.6 742.3,553.5 739.5,553.1 737.4,552.7 735.7,552.4ZM742.8,553.0 744.5,553.1 746.2,553.2 747.8,553.2 749.5,553.0 749.3,553.5 747.0,553.6 745.3,553.6 743.7,553.6ZM746.2,554.0 747.7,554.5 747.0,554.8ZM749.9,554.8 751.2,553.4 753.1,553.2 752.0,554.0 750.8,554.7ZM746.8,545.5 747.7,545.1 749.5,545.5 751.3,544.9 750.6,545.9 747.8,545.8 747.2,547.0 748.2,547.0 749.8,546.8 749.8,547.1 748.4,547.8 749.1,548.9 749.7,550.0 749.1,550.7 748.4,550.2 747.8,548.9 747.3,548.6 747.3,550.2 747.2,550.9 746.6,550.8 746.6,549.1 746.0,548.5 746.8,546.4ZM753.2,544.7 753.8,544.4 753.7,545.8 754.2,546.0 753.7,546.9 753.4,546.0ZM753.7,548.8 756.0,548.9 755.3,549.2 753.7,549.1ZM752.0,548.9 753.0,549.0 752.6,549.4ZM756.2,546.9 757.4,546.5 758.8,546.9 758.7,548.3 759.5,549.0 761.2,547.7 762.7,547.7 764.5,548.4 767.4,549.4 768.5,550.7 769.9,551.4 769.7,552.0 770.8,553.7 772.4,554.9 771.6,554.9 769.5,554.3 768.7,553.0 767.4,552.6 766.6,553.1 765.9,553.9 764.5,553.8 763.2,553.0 762.4,553.1 762.0,552.3 762.7,552.0 762.0,550.8 759.9,549.9 758.2,549.4 757.7,549.5 757.0,548.6 758.4,548.2 757.2,548.0 756.2,547.4ZM770.8,550.8 772.4,550.8 773.8,549.7 773.4,550.8 772.0,551.5 770.8,551.1ZM772.7,548.4 774.1,549.4 774.5,550.1 773.9,549.5 772.7,548.6ZM775.8,550.7 776.8,551.6 776.4,551.8ZM780.0,554.0 780.8,554.2 780.3,554.4ZM780.9,553.2 781.5,554.0 781.2,554.0ZM783.7,563.0 785.8,564.4 786.2,564.9 784.9,564.4ZM785.8,558.7 786.3,559.1 786.0,559.3ZM794.8,560.8 795.8,560.8 795.6,561.4 794.8,561.3ZM795.9,560.0 796.9,559.7 796.6,560.2ZM742.1,564.4 743.2,563.5 744.5,563.4 746.2,562.9 747.8,562.5 748.9,561.2 748.8,560.4 749.9,560.6 750.1,559.8 751.2,559.1 752.0,557.9 753.2,557.9 753.9,558.7 755.1,558.6 754.9,557.5 755.8,556.6 757.0,556.2 757.6,555.7 759.5,556.4 761.0,556.3 760.3,557.5 759.9,558.7 761.2,559.5 762.8,560.6 764.1,560.9 764.9,559.1 765.1,557.0 765.5,555.4 766.6,556.6 766.8,558.1 768.1,558.7 768.5,560.4 768.9,562.0 770.2,562.6 771.2,563.3 771.8,564.8 772.7,565.8 774.1,567.0 774.7,568.3 774.9,570.0 774.5,572.0 773.8,573.5 773.0,574.5 772.2,576.2 772.0,577.4 770.3,577.8 768.9,578.7 767.7,578.0 766.6,578.5 764.9,578.1 763.7,577.5 763.2,576.2 762.2,575.9 762.4,575.2 761.8,573.7 761.2,574.5 760.3,575.3 759.7,574.5 758.8,573.5 757.0,572.9 754.5,572.5 752.0,573.0 750.3,573.7 749.9,574.5 748.2,574.4 746.6,574.8 745.3,575.4 744.1,575.4 742.8,574.8 743.3,573.7 743.4,572.7 742.8,571.2 742.4,570.0 741.8,568.3 741.5,566.6 741.8,565.1ZM767.6,580.1 769.1,580.5 770.5,580.2 770.6,581.4 769.9,582.3 768.8,582.5 768.1,581.6ZM790.9,574.9 792.2,575.6 792.7,576.9 793.5,576.8 793.7,577.5 795.6,577.5 795.2,578.9 794.5,579.0 794.3,579.8 793.1,580.9 792.6,580.6 792.9,579.5 791.8,579.0 792.6,578.3 792.6,577.3 791.2,575.4ZM791.0,580.0 792.2,580.8 791.2,582.0 791.0,582.7 789.7,583.3 789.2,584.5 787.8,585.0 786.6,584.7 785.8,584.4 787.0,583.1 788.7,582.2 789.9,581.0 790.5,580.2ZM704.3,587.0 705.8,587.1 705.2,587.6ZM615.3,591.2 617.0,591.5 616.6,591.9ZM497.0,616.5 505.3,616.8 513.7,617.0 519.5,616.2 522.8,614.5 519.5,612.9 517.0,611.5 515.3,610.5 522.0,610.4 525.3,609.1 530.3,608.9 534.5,608.3 541.2,607.7 547.0,608.0 552.0,607.9 555.3,608.5 561.2,608.7 563.7,607.0 567.8,607.0 573.7,607.0 580.3,607.3 583.7,607.0 587.0,606.6 589.5,605.0 590.3,603.7 591.2,602.5 592.8,600.8 595.3,599.7 598.7,599.0 599.5,599.5 597.0,600.8 595.3,602.0 594.1,603.7 595.8,605.4 596.2,607.0 595.3,608.7 592.0,610.4 586.2,611.6 582.0,612.9 587.0,614.5 595.3,615.4 603.7,615.0 611.2,614.3 617.0,612.9 621.2,610.8 626.2,609.1 630.3,607.5 634.5,606.6 637.8,605.6 642.8,605.2 647.0,604.5 651.2,604.5 655.3,604.4 659.5,604.1 663.7,604.5 667.8,604.8 672.0,604.0 674.5,603.5 677.8,604.0 680.3,603.5 684.5,602.7 688.7,601.9 692.0,601.1 694.5,601.9 698.7,602.5 702.8,602.7 704.9,603.5 706.2,605.0 704.5,606.2 707.0,605.4 708.7,604.3 712.0,603.3 715.3,602.2 720.3,601.7 724.5,601.5 728.7,601.0 732.8,601.0 738.7,601.4 742.8,601.6 747.0,601.9 751.2,601.5 755.3,601.2 759.5,601.2 763.7,601.8 767.8,602.3 772.0,603.2 776.2,603.7 780.3,604.5 784.5,605.1 788.7,605.8 787.0,607.5 784.5,608.7 783.7,610.4 785.3,611.6 782.0,612.9 780.3,614.5 784.5,615.6 790.3,616.2 797.0,616.5 797.0,621.2 497.0,621.2ZM585.3,605.4 587.8,603.9 589.1,605.4 587.8,606.7 585.3,606.5ZM562.0,606.5 566.2,606.0 567.0,606.6 562.8,606.9ZM604.5,612.0 608.7,611.6 610.3,612.9 606.2,613.5ZM510.3,612.0 513.7,611.8 513.7,612.9 510.3,612.9ZM509.2,500.8 509.9,500.3 510.7,500.6 509.9,501.1ZM507.3,501.5 508.1,501.0 508.8,501.3 508.1,501.7ZM505.8,502.0 506.5,501.5 507.2,501.8 506.5,502.2ZM504.4,502.4 504.9,501.9 505.4,502.2 504.9,502.7ZM502.8,502.7 503.2,502.2 503.8,502.5 503.2,503.0ZM501.2,502.8 501.8,502.3 502.3,502.6 501.8,503.1ZM499.2,503.1 499.8,502.7 500.4,502.9 499.8,503.4ZM498.2,503.2 498.7,502.7 499.1,503.0 498.7,503.5ZM497.2,503.5 497.6,503.0 497.9,503.3 497.6,503.7ZM795.8,503.3 796.2,502.8 796.6,503.1 796.2,503.6ZM794.5,503.0 794.8,502.5 795.2,502.8 794.8,503.2ZM790.8,502.2 791.2,501.7 791.6,502.0 791.2,502.5ZM785.1,500.5 785.6,500.0 786.1,500.3 785.6,500.7ZM786.6,500.7 786.8,500.2 787.1,500.5 786.8,501.0ZM776.6,504.2 777.0,503.7 777.4,504.0 777.0,504.5ZM775.8,505.2 776.2,504.7 776.5,505.0 776.2,505.5ZM775.1,506.1 775.3,505.7 775.6,505.9 775.3,506.4ZM774.2,506.9 774.5,506.4 774.8,506.7 774.5,507.2ZM773.3,507.3 773.7,506.8 774.0,507.1 773.7,507.6ZM771.8,508.0 772.2,507.5 772.7,507.8 772.2,508.2ZM770.4,508.6 770.9,508.1 771.4,508.3 770.9,508.8ZM769.3,509.1 769.8,508.6 770.2,508.8 769.8,509.3ZM768.3,509.6 768.7,509.2 769.0,509.4 768.7,509.9ZM518.3,498.5 519.2,498.0 520.0,498.3 519.2,498.7ZM519.5,497.7 519.8,497.2 520.2,497.5 519.8,498.0ZM534.5,498.3 534.9,497.8 535.3,498.1 534.9,498.6ZM533.8,498.6 534.1,498.1 534.4,498.3 534.1,498.8ZM535.5,499.8 536.0,499.3 536.5,499.6 536.0,500.1ZM536.2,499.2 536.6,498.7 536.9,499.0 536.6,499.5ZM534.8,499.1 535.2,498.6 535.5,498.8 535.2,499.3ZM537.2,500.3 537.4,499.8 537.7,500.1 537.4,500.6ZM538.8,501.8 539.1,501.3 539.4,501.6 539.1,502.1ZM539.6,502.6 539.8,502.1 540.1,502.3 539.8,502.8ZM540.2,503.1 540.5,502.7 540.8,502.9 540.5,503.4ZM513.4,528.0 513.7,527.5 513.9,527.8 513.7,528.2ZM503.5,557.7 503.9,557.2 504.3,557.5 503.9,558.0ZM503.0,557.6 503.2,557.1 503.5,557.3 503.2,557.8ZM500.8,564.0 501.0,563.5 501.2,563.8 501.0,564.2ZM501.8,561.9 502.0,561.4 502.2,561.7 502.0,562.2ZM522.1,561.0 522.4,560.5 522.8,560.8 522.4,561.2ZM520.5,560.1 520.8,559.7 521.0,559.9 520.8,560.4ZM530.0,553.7 530.2,553.2 530.5,553.5 530.2,554.0ZM530.9,554.5 531.2,554.0 531.4,554.3 531.2,554.7ZM525.5,559.6 525.8,559.2 526.0,559.4 525.8,559.9ZM523.8,558.8 524.1,558.3 524.3,558.6 524.1,559.1ZM526.8,560.5 527.0,560.0 527.2,560.3 527.0,560.7ZM529.2,561.7 529.5,561.2 529.8,561.5 529.5,562.0ZM531.3,563.4 531.6,562.9 531.8,563.2 531.6,563.7ZM534.3,565.6 534.5,565.1 534.7,565.3 534.5,565.8ZM527.2,559.0 527.4,558.5 527.7,558.8 527.4,559.2ZM513.7,564.0 513.8,563.5 514.0,563.8 513.8,564.2ZM515.6,544.7 515.8,544.2 516.1,544.5 515.8,545.0ZM570.6,546.9 571.0,546.4 571.4,546.7 571.0,547.2ZM571.5,546.8 571.8,546.3 572.0,546.6 571.8,547.1ZM570.6,546.5 570.8,546.0 570.9,546.3 570.8,546.7ZM555.7,568.9 555.8,568.4 556.0,568.7 555.8,569.2ZM554.2,530.6 554.5,530.2 554.8,530.4 554.5,530.9ZM551.2,531.1 551.4,530.6 551.6,530.8 551.4,531.3ZM548.2,522.1 548.4,521.7 548.6,521.9 548.4,522.4ZM580.1,568.2 580.2,567.7 580.4,568.0 580.2,568.5ZM581.2,574.3 581.3,573.8 581.5,574.1 581.3,574.6ZM498.2,561.7 498.5,561.2 498.8,561.5 498.5,562.0ZM497.2,560.1 497.4,559.7 497.7,559.9 497.4,560.4ZM500.0,557.4 500.2,556.9 500.3,557.2 500.2,557.7ZM498.5,558.2 498.7,557.7 498.8,558.0 498.7,558.5ZM503.5,553.8 503.7,553.3 503.8,553.6 503.7,554.1ZM504.2,554.1 504.3,553.6 504.5,553.8 504.3,554.3ZM499.8,546.1 499.9,545.7 500.1,545.9 499.9,546.4ZM512.7,555.0 512.8,554.5 513.0,554.8 512.8,555.2ZM521.7,554.6 521.8,554.1 522.0,554.3 521.8,554.8ZM592.8,531.1 593.0,530.6 593.2,530.8 593.0,531.3ZM594.3,531.2 594.5,530.7 594.7,531.0 594.5,531.5ZM595.2,532.1 595.5,531.6 595.8,531.8 595.5,532.3ZM594.6,531.9 594.8,531.4 594.9,531.7 594.8,532.2ZM595.4,532.8 595.8,532.3 596.1,532.6 595.8,533.1ZM595.7,533.5 595.9,533.0 596.2,533.3 595.9,533.7ZM595.9,534.1 596.2,533.7 596.4,533.9 596.2,534.4ZM596.0,534.7 596.2,534.2 596.4,534.5 596.2,535.0ZM595.8,535.3 596.0,534.8 596.2,535.1 596.0,535.6ZM597.2,535.3 597.4,534.8 597.6,535.1 597.4,535.6ZM595.4,536.2 595.6,535.7 595.8,536.0 595.6,536.5ZM593.4,537.1 593.7,536.7 593.9,536.9 593.7,537.4ZM589.2,536.1 589.5,535.7 589.8,535.9 589.5,536.4ZM588.5,535.9 588.7,535.4 588.8,535.7 588.7,536.2ZM589.9,536.1 590.1,535.7 590.2,535.9 590.1,536.4ZM582.0,525.9 582.4,525.4 582.8,525.7 582.4,526.2ZM581.7,524.1 582.0,523.7 582.3,523.9 582.0,524.4ZM582.4,524.4 582.7,523.9 582.9,524.2 582.7,524.7ZM583.4,526.1 583.7,525.7 583.9,525.9 583.7,526.4ZM584.0,526.7 584.2,526.2 584.5,526.5 584.2,527.0ZM585.5,528.8 585.8,528.3 586.0,528.6 585.8,529.1ZM585.1,527.4 585.3,526.9 585.6,527.2 585.3,527.7ZM581.8,526.1 582.0,525.6 582.2,525.8 582.0,526.3ZM586.8,528.1 587.0,527.7 587.2,527.9 587.0,528.4ZM579.2,530.2 579.3,529.7 579.5,530.0 579.3,530.5ZM577.8,528.3 578.0,527.8 578.2,528.1 578.0,528.6ZM592.9,519.4 593.1,518.9 593.2,519.2 593.1,519.7ZM574.2,532.7 574.5,532.2 574.8,532.5 574.5,533.0ZM574.4,529.3 574.6,528.8 574.8,529.1 574.6,529.6ZM623.1,514.2 623.4,513.7 623.8,514.0 623.4,514.5ZM624.1,514.1 624.3,513.6 624.6,513.8 624.3,514.3ZM620.8,513.5 621.0,513.0 621.2,513.3 621.0,513.7ZM623.5,514.1 623.7,513.7 623.8,513.9 623.7,514.4ZM626.5,532.5 626.8,532.0 627.0,532.3 626.8,532.7ZM627.8,532.9 627.9,532.4 628.1,532.7 627.9,533.2ZM626.5,533.9 626.7,533.4 626.8,533.7 626.7,534.2ZM631.9,522.4 632.1,521.9 632.2,522.2 632.1,522.7ZM632.5,522.9 632.7,522.4 632.8,522.7 632.7,523.2ZM635.4,522.1 635.7,521.7 635.9,521.9 635.7,522.4ZM652.2,546.1 652.5,545.6 652.8,545.8 652.5,546.3ZM653.0,545.0 653.2,544.5 653.3,544.8 653.2,545.2ZM654.0,543.4 654.2,542.9 654.5,543.2 654.2,543.7ZM651.5,547.5 651.7,547.0 651.8,547.3 651.7,547.7ZM642.1,559.6 642.2,559.1 642.4,559.3 642.2,559.8ZM634.8,552.9 635.0,552.4 635.2,552.7 635.0,553.2ZM636.6,577.2 636.8,576.7 636.9,577.0 636.8,577.5ZM638.6,579.9 638.8,579.4 638.9,579.7 638.8,580.2ZM616.2,591.6 616.6,591.2 616.9,591.4 616.6,591.9ZM624.7,594.5 624.9,594.0 625.2,594.3 624.9,594.7ZM624.1,595.8 624.2,595.3 624.4,595.6 624.2,596.1ZM608.7,596.8 609.1,596.3 609.5,596.6 609.1,597.1ZM597.2,598.1 597.8,597.7 598.4,597.9 597.8,598.4ZM596.2,598.6 596.6,598.2 596.9,598.4 596.6,598.9ZM600.5,597.3 600.8,596.8 601.0,597.1 600.8,597.6ZM598.8,597.9 599.1,597.4 599.3,597.7 599.1,598.2ZM649.7,591.6 649.8,591.2 650.0,591.4 649.8,591.9ZM678.2,585.4 678.5,584.9 678.8,585.2 678.5,585.7ZM689.8,585.0 690.1,584.5 690.3,584.8 690.1,585.2ZM704.7,587.4 704.9,586.9 705.2,587.2 704.9,587.7ZM708.0,590.6 708.2,590.1 708.5,590.3 708.2,590.8ZM711.4,578.0 711.6,577.5 711.8,577.8 711.6,578.2ZM693.1,550.1 693.2,549.7 693.4,549.9 693.2,550.4ZM685.4,554.1 685.6,553.7 685.8,553.9 685.6,554.4ZM683.7,556.5 683.9,556.0 684.2,556.3 683.9,556.7ZM684.5,557.0 684.7,556.5 684.8,556.8 684.7,557.2ZM683.0,556.1 683.2,555.6 683.3,555.8 683.2,556.3ZM699.7,562.7 699.8,562.2 700.0,562.5 699.8,563.0ZM707.9,542.8 708.0,542.3 708.1,542.6 708.0,543.1ZM708.1,545.5 708.2,545.0 708.4,545.3 708.2,545.7ZM707.7,540.9 707.8,540.4 708.0,540.7 707.8,541.2ZM707.2,552.4 707.3,551.9 707.5,552.2 707.3,552.7ZM723.9,536.1 724.3,535.6 724.8,535.8 724.3,536.3ZM724.1,537.0 724.4,536.5 724.8,536.8 724.4,537.2ZM723.9,537.5 724.2,537.0 724.4,537.3 724.2,537.7ZM724.9,540.4 725.2,539.9 725.4,540.2 725.2,540.7ZM724.3,539.2 724.5,538.7 724.7,539.0 724.5,539.5ZM726.8,543.8 727.0,543.3 727.2,543.6 727.0,544.1ZM727.9,545.5 728.2,545.0 728.6,545.3 728.2,545.7ZM729.0,547.1 729.3,546.6 729.7,546.8 729.3,547.3ZM729.7,548.1 730.0,547.6 730.3,547.8 730.0,548.3ZM730.3,548.8 730.6,548.3 730.8,548.6 730.6,549.1ZM732.1,550.8 732.2,550.3 732.4,550.6 732.2,551.1ZM734.9,555.1 735.1,554.6 735.2,554.8 735.1,555.3ZM727.5,556.4 727.7,555.9 727.8,556.2 727.7,556.7ZM735.0,548.1 735.5,547.7 736.0,547.9 735.5,548.4ZM736.6,548.7 736.9,548.2 737.2,548.5 736.9,549.0ZM736.9,543.1 737.2,542.6 737.4,542.8 737.2,543.3ZM733.8,545.6 734.1,545.1 734.3,545.3 734.1,545.8ZM733.8,546.6 734.1,546.1 734.3,546.3 734.1,546.8ZM753.5,524.1 753.8,523.7 754.2,523.9 753.8,524.4ZM753.3,524.5 753.5,524.0 753.7,524.3 753.5,524.7ZM754.7,522.7 754.9,522.2 755.2,522.5 754.9,523.0ZM755.5,521.0 755.8,520.5 756.0,520.8 755.8,521.2ZM750.2,526.0 750.5,525.5 750.8,525.8 750.5,526.2ZM751.2,525.6 751.4,525.2 751.6,525.4 751.4,525.9ZM752.0,518.5 752.4,518.0 752.8,518.3 752.4,518.7ZM754.5,517.6 754.8,517.2 755.0,517.4 754.8,517.9ZM762.1,514.6 762.3,514.2 762.6,514.4 762.3,514.9ZM757.8,516.1 758.0,515.7 758.2,515.9 758.0,516.4ZM765.4,523.8 765.5,523.3 765.6,523.6 765.5,524.1ZM764.6,525.6 764.8,525.2 764.9,525.4 764.8,525.9ZM767.5,535.1 767.7,534.7 767.9,534.9 767.7,535.4ZM768.2,533.6 768.4,533.2 768.6,533.4 768.4,533.9ZM768.4,531.3 768.5,530.8 768.6,531.1 768.5,531.6ZM758.9,540.1 759.1,539.7 759.3,539.9 759.1,540.4ZM762.0,538.4 762.1,537.9 762.2,538.2 762.1,538.7ZM773.3,540.1 773.5,539.7 773.7,539.9 773.5,540.4ZM778.6,540.6 778.8,540.1 779.0,540.3 778.8,540.8ZM782.7,541.9 782.8,541.4 783.0,541.7 782.8,542.2ZM789.5,540.4 789.7,539.9 789.8,540.2 789.7,540.7ZM786.8,538.8 787.0,538.3 787.2,538.6 787.0,539.1ZM786.6,539.0 786.8,538.5 786.9,538.8 786.8,539.2ZM791.0,545.1 791.2,544.7 791.3,544.9 791.2,545.4ZM786.0,546.7 786.1,546.2 786.2,546.5 786.1,547.0ZM796.2,553.4 796.3,552.9 796.5,553.2 796.3,553.7ZM788.1,556.0 788.2,555.5 788.4,555.8 788.2,556.2ZM785.1,555.2 785.3,554.7 785.6,555.0 785.3,555.5ZM786.2,559.8 786.6,559.3 787.0,559.6 786.6,560.1ZM787.0,561.1 787.2,560.6 787.5,560.8 787.2,561.3ZM787.8,562.1 788.1,561.7 788.3,561.9 788.1,562.4ZM788.1,562.6 788.2,562.2 788.4,562.4 788.2,562.9ZM786.7,564.1 786.9,563.6 787.2,563.8 786.9,564.3ZM786.2,563.7 786.4,563.2 786.6,563.5 786.4,564.0ZM780.2,555.9 780.5,555.4 780.8,555.7 780.5,556.2ZM781.4,555.0 781.8,554.5 782.2,554.8 781.8,555.2ZM779.0,553.1 779.5,552.7 780.0,552.9 779.5,553.4ZM777.8,552.4 778.2,551.9 778.7,552.2 778.2,552.7ZM778.0,553.6 778.3,553.1 778.7,553.3 778.3,553.8ZM777.4,553.0 777.7,552.5 777.9,552.8 777.7,553.2ZM769.2,548.0 769.6,547.5 770.0,547.8 769.6,548.2ZM771.5,547.6 771.8,547.1 772.0,547.3 771.8,547.8ZM772.5,554.2 772.8,553.7 773.0,554.0 772.8,554.5ZM772.8,553.6 773.0,553.1 773.2,553.3 773.0,553.8ZM774.7,555.8 774.9,555.3 775.2,555.6 774.9,556.1ZM775.2,555.9 775.3,555.4 775.5,555.7 775.3,556.2ZM774.0,553.9 774.2,553.4 774.3,553.7 774.2,554.2ZM779.4,572.6 779.5,572.1 779.6,572.3 779.5,572.8ZM786.9,570.5 787.0,570.0 787.1,570.3 787.0,570.7ZM499.7,583.0 499.9,582.5 500.2,582.8 499.9,583.2ZM786.5,585.5 786.8,585.0 787.2,585.3 786.8,585.7ZM785.2,588.6 785.5,588.1 785.8,588.3 785.5,588.8ZM787.8,590.1 788.0,589.6 788.2,589.8 788.0,590.3ZM779.2,591.8 779.4,591.3 779.6,591.6 779.4,592.1ZM795.9,587.7 796.0,587.2 796.1,587.5 796.0,588.0ZM754.9,546.5 755.3,546.0 755.8,546.3 755.3,546.7ZM755.8,546.6 756.0,546.1 756.2,546.3 756.0,546.8ZM754.8,547.9 755.2,547.4 755.5,547.7 755.2,548.2ZM753.2,547.6 753.6,547.1 753.9,547.3 753.6,547.8ZM751.6,547.8 752.0,547.3 752.4,547.6 752.0,548.1ZM750.6,547.7 750.9,547.2 751.2,547.5 750.9,548.0ZM749.4,547.5 749.7,547.0 749.9,547.3 749.7,547.7ZM753.0,546.8 753.2,546.3 753.5,546.6 753.2,547.1ZM753.0,545.6 753.2,545.2 753.3,545.4 753.2,545.9ZM752.5,542.9 752.7,542.4 752.8,542.7 752.7,543.2ZM751.4,543.4 751.6,542.9 751.8,543.2 751.6,543.7ZM751.5,544.0 751.6,543.5 751.7,543.8 751.6,544.2ZM758.7,551.3 759.1,550.8 759.5,551.1 759.1,551.6ZM758.8,551.8 759.0,551.3 759.2,551.6 759.0,552.1ZM756.2,552.7 756.6,552.2 757.0,552.5 756.6,553.0ZM757.4,551.1 757.7,550.6 757.9,550.8 757.7,551.3ZM755.0,552.9 755.2,552.4 755.3,552.7 755.2,553.2ZM754.1,552.2 754.2,551.7 754.4,552.0 754.2,552.5ZM752.0,552.7 752.4,552.2 752.8,552.5 752.4,553.0ZM750.3,553.2 750.8,552.7 751.2,553.0 750.8,553.5ZM749.5,553.3 749.8,552.8 750.0,553.1 749.8,553.6ZM749.2,555.3 749.4,554.8 749.7,555.1 749.4,555.6ZM748.3,555.1 748.5,554.6 748.7,554.8 748.5,555.3ZM759.8,547.1 760.2,546.7 760.7,546.9 760.2,547.4ZM760.2,547.8 760.6,547.3 761.0,547.6 760.6,548.1ZM746.9,536.3 747.2,535.8 747.4,536.1 747.2,536.6ZM749.9,537.7 750.2,537.2 750.4,537.5 750.2,538.0ZM750.2,538.1 750.4,537.7 750.7,537.9 750.4,538.4ZM749.7,536.1 749.9,535.6 750.2,535.8 749.9,536.3ZM748.8,536.0 748.9,535.5 749.0,535.8 748.9,536.2ZM748.5,535.1 748.6,534.6 748.7,534.8 748.6,535.3ZM747.6,541.3 747.8,540.8 748.1,541.1 747.8,541.6ZM746.8,542.0 747.0,541.5 747.2,541.8 747.0,542.2ZM748.5,540.8 748.7,540.3 748.8,540.6 748.7,541.1ZM745.6,538.1 745.8,537.7 745.9,537.9 745.8,538.4ZM744.4,539.7 744.5,539.2 744.6,539.5 744.5,540.0ZM748.5,529.3 748.6,528.8 748.7,529.1 748.6,529.6ZM730.2,538.4 730.3,537.9 730.5,538.2 730.3,538.7ZM728.9,539.7 729.0,539.2 729.1,539.5 729.0,540.0ZM730.0,541.0 730.1,540.5 730.2,540.8 730.1,541.2ZM732.7,537.1 732.8,536.7 733.0,536.9 732.8,537.4ZM733.5,537.8 733.7,537.3 733.8,537.6 733.7,538.1ZM735.8,539.1 735.8,538.6 735.9,538.8 735.8,539.3ZM741.6,552.1 741.9,551.7 742.2,551.9 741.9,552.4ZM743.3,553.5 743.5,553.0 743.7,553.3 743.5,553.7ZM760.6,558.0 760.9,557.5 761.2,557.8 760.9,558.2ZM755.4,556.0 755.8,555.5 756.2,555.8 755.8,556.2ZM763.0,560.1 763.2,559.7 763.5,559.9 763.2,560.4ZM760.9,576.1 761.4,575.7 761.9,575.9 761.4,576.4ZM766.8,579.6 767.0,579.1 767.2,579.3 767.0,579.8ZM770.1,579.6 770.3,579.2 770.6,579.4 770.3,579.9ZM774.5,567.3 774.7,566.8 774.8,567.1 774.7,567.6ZM741.0,567.7 741.2,567.2 741.3,567.5 741.2,568.0ZM748.8,521.2 748.9,520.7 749.1,521.0 748.9,521.5ZM748.1,520.1 748.3,519.6 748.6,519.8 748.3,520.3ZM746.5,526.6 746.7,526.2 746.8,526.4 746.7,526.9ZM740.9,528.2 741.0,527.7 741.1,528.0 741.0,528.5ZM741.8,527.7 741.9,527.2 742.0,527.5 741.9,528.0ZM641.4,498.6 641.8,498.1 642.1,498.3 641.8,498.8ZM640.9,498.1 641.2,497.6 641.4,497.8 641.2,498.3ZM640.8,498.6 640.9,498.2 641.1,498.4 640.9,498.9ZM641.8,499.3 642.0,498.8 642.2,499.1 642.0,499.6ZM641.7,499.9 641.8,499.4 642.0,499.7 641.8,500.2ZM644.2,497.1 644.4,496.7 644.7,496.9 644.4,497.4ZM645.8,496.1 646.0,495.6 646.2,495.8 646.0,496.3ZM643.1,501.1 643.2,500.7 643.4,500.9 643.2,501.4ZM641.0,494.6 641.2,494.2 641.5,494.4 641.2,494.9ZM659.2,500.4 659.4,499.9 659.6,500.2 659.4,500.7ZM655.2,500.2 655.7,499.7 656.1,500.0 655.7,500.5ZM656.2,500.6 656.6,500.2 656.9,500.4 656.6,500.9ZM660.7,499.0 660.9,498.5 661.1,498.8 660.9,499.2ZM665.3,497.6 665.8,497.1 666.2,497.3 665.8,497.8ZM665.7,497.2 665.9,496.7 666.2,497.0 665.9,497.5ZM663.4,496.1 663.7,495.7 663.9,495.9 663.7,496.4ZM662.4,488.0 662.8,487.5 663.2,487.8 662.8,488.2ZM659.1,489.1 659.5,488.6 659.9,488.8 659.5,489.3ZM658.3,489.5 658.7,489.0 659.0,489.3 658.7,489.7ZM657.8,489.7 658.0,489.2 658.2,489.5 658.0,490.0ZM665.4,487.6 665.8,487.1 666.1,487.3 665.8,487.8ZM666.3,487.1 666.6,486.7 666.8,486.9 666.6,487.4ZM639.6,487.1 639.9,486.7 640.2,486.9 639.9,487.4ZM662.7,484.3 662.8,483.8 663.0,484.1 662.8,484.6ZM667.3,481.5 667.8,481.0 668.3,481.3 667.8,481.7ZM664.9,481.6 665.3,481.2 665.8,481.4 665.3,481.9ZM665.2,480.1 666.2,479.6 667.2,479.8 666.2,480.3ZM663.4,479.8 664.1,479.3 664.8,479.6 664.1,480.1ZM674.2,479.5 674.5,479.0 674.8,479.3 674.5,479.7ZM686.5,479.1 687.0,478.7 687.5,478.9 687.0,479.4ZM690.6,479.4 691.2,478.9 691.8,479.2 691.2,479.7ZM694.3,479.1 694.9,478.6 695.5,478.8 694.9,479.3ZM697.3,479.0 697.8,478.5 698.3,478.8 697.8,479.2ZM700.3,478.8 700.8,478.3 701.2,478.6 700.8,479.1ZM695.8,478.2 696.2,477.7 696.5,478.0 696.2,478.5ZM692.4,478.8 692.8,478.3 693.2,478.6 692.8,479.1ZM688.8,479.4 689.1,478.9 689.3,479.2 689.1,479.7ZM695.8,488.1 696.2,487.6 696.6,487.8 696.2,488.3ZM687.3,488.6 687.8,488.2 688.3,488.4 687.8,488.9ZM688.4,488.8 688.7,488.3 688.9,488.6 688.7,489.1ZM704.5,485.2 704.9,484.7 705.3,485.0 704.9,485.5ZM710.1,485.2 710.3,484.7 710.6,485.0 710.3,485.5ZM713.0,485.5 713.2,485.0 713.5,485.3 713.2,485.7ZM710.5,480.1 710.8,479.6 711.0,479.8 710.8,480.3ZM715.5,484.0 715.8,483.5 716.0,483.8 715.8,484.2ZM718.0,484.2 718.2,483.7 718.5,484.0 718.2,484.5ZM723.0,482.0 723.2,481.5 723.5,481.8 723.2,482.2ZM725.8,482.7 726.2,482.2 726.5,482.5 726.2,483.0ZM727.0,479.5 727.8,479.0 728.7,479.3 727.8,479.7ZM726.1,478.8 726.6,478.3 727.1,478.6 726.6,479.1ZM729.3,480.5 730.3,480.0 731.3,480.3 730.3,480.7ZM732.1,480.9 732.8,480.4 733.6,480.7 732.8,481.2ZM735.8,481.1 736.2,480.7 736.5,480.9 736.2,481.4ZM740.6,482.4 740.8,481.9 740.9,482.2 740.8,482.7ZM760.1,482.5 760.3,482.0 760.6,482.3 760.3,482.7ZM762.0,483.1 762.8,482.7 763.7,482.9 762.8,483.4ZM764.1,484.8 764.9,484.3 765.8,484.6 764.9,485.1ZM766.2,485.1 766.6,484.6 767.0,484.8 766.6,485.3ZM769.3,483.6 769.9,483.2 770.5,483.4 769.9,483.9ZM771.7,483.8 772.0,483.3 772.3,483.6 772.0,484.1ZM773.4,482.3 773.7,481.8 773.9,482.1 773.7,482.6ZM771.0,482.4 771.2,481.9 771.3,482.2 771.2,482.7ZM781.3,488.3 781.6,487.8 781.8,488.1 781.6,488.6ZM787.5,488.1 787.8,487.7 788.2,487.9 787.8,488.4ZM761.2,500.5 761.6,500.0 762.0,500.3 761.6,500.7ZM761.8,501.0 762.0,500.5 762.2,500.8 762.0,501.2ZM783.4,497.1 783.7,496.7 783.9,496.9 783.7,497.4ZM785.2,500.3 785.3,499.8 785.5,500.1 785.3,500.6ZM667.8,517.0 668.2,516.5 668.7,516.8 668.2,517.2ZM666.3,513.8 666.6,513.3 666.8,513.6 666.6,514.1ZM667.2,514.2 667.4,513.7 667.7,514.0 667.4,514.5ZM668.4,513.6 668.7,513.2 668.9,513.4 668.7,513.9ZM668.5,514.3 668.7,513.8 668.8,514.1 668.7,514.6ZM669.3,514.9 669.5,514.4 669.7,514.7 669.5,515.2ZM670.1,516.1 670.3,515.7 670.6,515.9 670.3,516.4ZM669.5,516.6 669.7,516.2 669.8,516.4 669.7,516.9ZM667.9,515.4 668.1,514.9 668.3,515.2 668.1,515.7ZM667.2,515.6 667.3,515.2 667.5,515.4 667.3,515.9ZM668.1,516.0 668.2,515.5 668.2,515.8 668.2,516.2ZM664.0,514.5 664.2,514.0 664.3,514.3 664.2,514.7ZM663.4,513.3 663.5,512.8 663.6,513.1 663.5,513.6ZM658.9,516.4 659.0,515.9 659.1,516.2 659.0,516.7ZM656.0,518.1 656.1,517.7 656.2,517.9 656.1,518.4ZM648.0,513.8 648.2,513.3 648.3,513.6 648.2,514.1ZM650.2,513.0 650.3,512.5 650.5,512.8 650.3,513.2ZM656.9,515.6 657.0,515.2 657.1,515.4 657.0,515.9ZM655.5,510.6 655.6,510.2 655.7,510.4 655.6,510.9ZM660.9,510.5 661.2,510.0 661.4,510.3 661.2,510.7ZM659.3,509.2 659.5,508.7 659.7,509.0 659.5,509.5ZM658.9,508.9 659.1,508.4 659.2,508.7 659.1,509.2ZM689.0,524.6 689.1,524.2 689.2,524.4 689.1,524.9ZM693.5,524.0 693.7,523.5 693.9,523.8 693.7,524.2ZM681.9,532.4 682.0,531.9 682.1,532.2 682.0,532.7ZM680.2,533.2 680.4,532.7 680.6,533.0 680.4,533.5ZM695.8,529.3 695.9,528.8 696.0,529.1 695.9,529.6ZM562.4,483.0 563.2,482.5 564.1,482.8 563.2,483.2ZM567.2,483.8 567.8,483.3 568.4,483.6 567.8,484.1ZM565.9,481.5 566.6,481.0 567.2,481.3 566.6,481.7ZM560.2,481.1 561.2,480.6 562.2,480.8 561.2,481.3ZM564.0,480.6 564.5,480.2 565.0,480.4 564.5,480.9ZM554.3,481.1 555.3,480.7 556.3,480.9 555.3,481.4ZM553.7,481.5 554.1,481.0 554.5,481.3 554.1,481.7ZM559.2,482.0 559.5,481.5 559.8,481.8 559.5,482.2ZM561.5,483.0 562.0,482.5 562.5,482.8 562.0,483.2ZM568.2,480.8 568.7,480.3 569.1,480.6 568.7,481.1ZM571.7,482.1 572.0,481.7 572.3,481.9 572.0,482.4ZM576.6,485.3 577.0,484.8 577.4,485.1 577.0,485.6ZM581.3,485.6 582.0,485.1 582.7,485.3 582.0,485.8ZM580.4,484.9 580.8,484.4 581.1,484.7 580.8,485.2ZM582.2,489.5 582.8,489.0 583.5,489.3 582.8,489.7ZM584.1,490.1 584.5,489.6 584.9,489.8 584.5,490.3ZM580.8,489.1 581.2,488.6 581.5,488.8 581.2,489.3ZM580.4,494.6 580.8,494.2 581.1,494.4 580.8,494.9ZM580.1,496.5 580.3,496.0 580.6,496.3 580.3,496.7ZM580.3,499.4 580.8,498.9 581.2,499.2 580.8,499.7ZM579.9,502.1 580.3,501.7 580.8,501.9 580.3,502.4ZM578.4,494.0 578.7,493.5 578.9,493.8 578.7,494.2ZM592.8,495.1 593.1,494.6 593.4,494.8 593.1,495.3ZM592.7,496.0 592.8,495.5 593.0,495.8 592.8,496.2ZM588.4,494.0 588.7,493.5 588.9,493.8 588.7,494.2ZM582.9,493.4 583.2,492.9 583.6,493.2 583.2,493.7ZM581.8,493.6 582.0,493.1 582.2,493.3 582.0,493.8ZM577.5,491.5 577.8,491.0 578.2,491.3 577.8,491.7ZM575.5,491.3 575.8,490.8 576.0,491.1 575.8,491.6ZM595.5,506.8 595.8,506.3 596.0,506.6 595.8,507.1ZM593.7,507.6 594.3,507.2 595.0,507.4 594.3,507.9ZM596.0,507.8 596.6,507.3 597.2,507.6 596.6,508.1ZM593.8,505.1 594.5,504.6 595.2,504.8 594.5,505.3ZM595.2,505.4 595.5,504.9 595.8,505.2 595.5,505.7ZM600.0,507.2 600.1,506.7 600.2,507.0 600.1,507.5ZM596.8,509.7 597.0,509.2 597.2,509.5 597.0,510.0ZM591.2,509.1 591.3,508.6 591.5,508.8 591.3,509.3ZM588.5,511.9 588.7,511.4 588.8,511.7 588.7,512.2ZM588.0,511.8 588.2,511.3 588.3,511.6 588.2,512.1ZM585.7,512.3 586.2,511.8 586.7,512.1 586.2,512.6ZM583.9,516.9 584.1,516.4 584.2,516.7 584.1,517.2ZM578.7,525.8 578.8,525.3 579.0,525.6 578.8,526.1ZM579.5,525.6 579.7,525.1 579.8,525.3 579.7,525.8ZM546.9,518.0 547.2,517.5 547.4,517.8 547.2,518.2ZM548.2,518.5 548.3,518.0 548.5,518.3 548.3,518.7ZM550.8,522.9 551.0,522.4 551.2,522.7 551.0,523.2ZM552.4,522.0 552.6,521.5 552.8,521.8 552.6,522.2ZM553.2,522.1 553.4,521.7 553.6,521.9 553.4,522.4ZM558.1,528.4 558.2,527.9 558.4,528.2 558.2,528.7Z" fill="#f0aca3" stroke="#9e4e46" stroke-width="1.1"/>
<path d="M688.0,507.6 689.5,507.1 691.2,507.3 691.2,508.5 689.8,508.5 689.5,509.1 688.9,509.2 689.9,510.2 690.8,510.6 690.8,511.5 691.2,512.5 691.9,513.7 691.9,515.1 690.3,515.5 688.8,515.1 687.8,514.2 688.1,513.4 688.2,512.5 687.4,511.3 686.6,510.4 686.6,509.1 686.0,509.0 686.8,508.2 687.6,508.0Z" fill="#ffbfbf" stroke="#9e4e46" stroke-width="1.1"/>
<path d="M529.5,488.2 529.5,496.0 531.2,496.2 532.4,497.0 534.5,496.6 535.8,497.5 537.2,499.0 538.7,499.5 538.7,500.5M544.7,505.4 567.7,505.4 568.1,505.1 570.3,506.0 572.4,506.2 573.3,506.0 576.3,507.2 577.4,507.9 578.2,508.5 578.3,510.4 577.8,511.1 578.2,511.5 581.2,510.5 581.2,510.0 583.2,509.6 584.5,508.7 587.4,508.7 588.2,508.0 589.3,506.7 590.3,506.8 590.5,508.0 591.2,508.6M549.4,519.1 551.3,519.1 554.5,520.1 556.8,520.1 556.8,519.7 558.2,519.7 559.9,521.5 561.0,522.0 561.7,521.4 562.8,521.6 564.1,523.3 566.0,524.6M570.2,534.0 570.3,533.5 570.6,532.9 571.6,532.8 571.7,531.4 572.7,531.4 573.4,530.8M572.7,531.4 572.7,533.0 573.4,533.1M572.7,533.0 572.6,534.2 571.9,534.7M572.6,534.2 573.8,534.6 573.9,535.1M574.2,535.4 575.3,534.7 576.3,533.9 577.7,533.7M575.6,537.0 576.6,537.0 577.2,537.1M577.9,539.5 578.0,538.3M587.2,530.7 587.2,529.8M587.6,536.4 586.3,537.9 586.7,539.1 586.8,540.2 588.2,540.4 589.1,541.1 590.8,541.0 590.5,542.5 590.9,543.5 591.2,545.2M591.2,545.2 592.4,545.5 593.7,545.0 593.2,542.8 594.7,543.0 596.2,542.5 596.4,541.9M596.4,541.9 595.9,541.2 597.0,539.1M596.4,541.9 597.2,542.5 597.0,544.5 598.2,545.1 599.5,544.6 599.9,544.6M599.5,541.2 599.2,542.0 598.7,543.3 599.9,544.6M599.9,544.6 601.6,544.3M602.0,541.5 601.6,544.3M601.6,544.3 603.2,544.3 604.0,542.7M591.2,545.2 588.8,544.8 589.1,547.0 588.7,549.7M588.7,549.7 586.6,548.2 585.3,547.0 584.2,546.3M584.2,546.3 582.8,546.0 581.2,545.0M584.2,546.3 584.1,547.5 582.0,549.0 581.2,550.4 580.1,549.0M588.7,549.7 586.2,550.4 585.5,552.3 586.3,554.1 588.2,554.1 588.2,555.4 589.1,555.4M589.1,555.4 589.7,556.6 589.5,558.5 589.1,559.7 589.1,560.8M589.1,560.8 588.3,561.5M589.1,560.8 589.9,562.5 590.2,564.1 591.0,565.2M589.1,555.4 590.1,555.4 592.6,554.4 592.6,555.8 594.5,556.7 596.2,557.5 596.8,557.5 596.8,559.8 598.4,559.8 598.5,560.8 599.0,561.2 598.7,562.7M598.7,562.7 597.7,562.3 595.6,562.5 594.8,564.7M594.8,564.7 593.4,565.2 592.7,564.6 591.0,565.2M591.0,565.2 591.2,566.2 589.9,567.0 589.9,568.7 588.8,570.8 588.2,572.5 588.7,574.1 588.2,576.2 587.8,578.3 587.2,580.4 587.2,582.9 587.4,584.5 586.6,586.6 585.9,587.9 586.8,588.7 587.0,589.5 590.0,589.8M598.7,562.7 598.8,564.6 600.6,564.8 600.8,566.2 601.8,566.3 601.5,567.5M594.8,564.7 597.0,566.2 599.0,567.3 598.2,568.9 600.3,569.0 601.5,567.5M601.5,567.5 602.2,568.5 600.6,569.8 599.0,571.4M599.0,571.4 598.5,573.3 598.4,574.5M599.0,571.4 600.8,572.0 602.4,573.3 602.5,574.3M589.8,590.0 589.8,592.0M645.3,517.0 645.6,518.3 646.0,519.4 644.1,520.0 642.8,521.2 639.8,522.3 639.8,523.1M639.8,523.1 636.0,523.1M639.8,523.1 639.8,524.5 637.0,524.5 637.0,526.6 636.2,527.0 636.2,528.5 632.8,528.5M639.8,523.5 642.9,525.4M642.9,525.4 641.6,525.4 642.0,529.0 642.4,532.6 642.4,533.3 639.1,533.3 638.2,533.6 637.4,533.4 637.2,533.9 636.8,534.0M642.9,525.4 648.5,529.0 649.5,530.3 650.5,530.2M650.5,530.2 652.0,529.7 657.0,526.6M657.0,526.6 655.3,525.8 654.9,524.1 655.2,522.0 654.9,521.0M654.9,521.0 654.5,519.5 653.3,518.3 653.9,517.0 654.1,515.5M654.9,521.0 655.6,519.7 656.6,518.6M667.8,519.9 667.8,527.9 667.8,529.5 667.0,529.5 667.0,530.0M667.0,530.0 660.3,526.7 659.5,527.0 658.8,527.4 657.0,526.6M667.8,527.9 677.8,527.9M667.0,530.0 667.0,533.1 666.1,533.3 665.6,535.0 665.3,535.6 666.1,536.9M659.5,527.0 659.9,528.7 660.2,529.3 659.9,532.2 658.2,534.1 658.3,534.8M650.5,530.2 650.5,532.2 649.9,533.3 648.1,533.5 647.2,533.8M658.3,534.8 657.4,535.3 655.3,535.1 653.7,535.1 652.4,534.9 650.8,534.8 650.0,536.5M650.0,536.5 649.0,536.0 648.8,535.7 647.8,535.0 647.2,533.8M647.2,533.8 645.3,534.4 643.7,535.0 642.6,536.4 642.4,537.5M636.8,534.0 637.5,535.9M637.5,535.9 639.5,535.9 640.1,537.0 640.3,537.7M640.3,537.7 641.8,537.5 642.4,537.5M633.2,532.9 634.9,532.4 635.8,532.9 636.8,534.0M633.1,535.9 635.6,535.7 637.5,535.9M633.0,534.9 635.3,534.8 635.3,535.2 633.0,535.3M635.6,535.7 635.6,536.5 634.5,537.0M636.0,538.7 636.6,538.0 637.8,537.9 638.4,539.1M638.4,539.1 637.4,540.5M638.4,539.1 639.2,540.0 640.0,539.9M640.0,539.9 640.8,542.5M640.0,539.9 640.3,537.7M644.3,542.0 644.7,540.0 644.7,538.3M642.4,537.5 644.7,538.3M644.7,538.3 644.6,537.0 646.9,537.0M648.0,541.1 647.4,539.5 647.2,537.9 646.9,537.0M648.4,541.0 648.3,538.7 647.8,537.0M649.2,540.9 649.3,538.7 650.0,536.5M646.9,537.0 647.8,537.0 648.8,535.7M654.1,542.3 655.2,540.8 656.6,540.5 657.7,539.1 658.5,537.0 659.1,535.8 658.7,535.2M659.1,535.8 659.5,537.9 658.6,538.1 659.8,540.0M659.8,540.0 659.1,541.6 660.3,544.3M655.2,544.3 658.0,544.4 660.3,544.3M655.2,545.4 656.4,545.4 656.4,544.4M658.0,544.4 658.9,545.4 659.0,547.5 657.4,548.0 656.6,548.3 656.8,549.1 656.2,549.5M660.3,544.3 662.4,543.3M662.4,543.3 662.0,545.4 661.8,546.6 660.5,547.9 660.2,549.4 659.7,550.0 658.2,550.2 657.6,550.0 657.2,551.0M657.0,550.4 657.8,550.0M659.8,540.0 662.4,539.5 664.5,538.3 666.1,536.9M666.1,536.9 667.0,539.0 668.0,539.7 669.8,541.9M662.4,543.3 663.2,542.0 665.8,542.7 667.8,542.0 669.8,541.9M667.0,539.0 667.8,537.6 670.3,538.3 672.0,537.9 674.1,536.2 675.2,538.3M675.2,538.3 674.5,539.5 676.4,541.7M675.2,538.3 675.3,537.4 676.6,535.8 677.3,534.2M677.3,534.2 677.8,532.0 679.1,531.2M677.3,534.2 678.7,534.0 680.3,534.1 682.3,535.8M682.3,535.8 681.8,537.0 682.8,536.6M682.7,537.1 683.7,538.7 686.2,539.5 687.0,539.5 684.5,542.0 682.0,542.7 681.2,543.0M676.4,541.7 677.0,542.5 678.7,543.2 679.9,543.4 681.2,543.0M681.2,543.0 681.2,546.9 681.6,547.6M676.4,541.7 675.3,542.7 672.7,543.3 669.8,541.9M675.3,542.7 676.2,544.7 675.3,546.2 675.2,547.0M675.2,547.0 678.4,548.7 679.7,550.1M672.7,543.3 673.0,544.4 671.8,545.7 671.7,547.4M675.2,547.0 672.4,547.0 671.7,547.4M672.4,547.0 672.7,548.2 672.4,549.1 671.4,549.9M671.2,548.5 672.7,548.2M671.7,547.4 671.2,548.5 671.4,549.9M671.4,549.9 671.6,551.2 672.7,553.0M672.7,553.0 674.4,554.0 675.3,554.1 675.8,555.8M675.8,555.8 678.2,556.0 680.7,554.9M672.7,553.0 670.9,553.4 670.8,555.0 671.8,557.4 669.9,556.4 667.2,555.5 667.0,555.3M657.2,551.3 658.1,551.1 660.8,551.1 661.6,553.0 663.2,552.5 665.2,552.3 665.2,554.1 665.6,555.4 667.0,555.3M667.0,555.3 667.0,557.0 665.3,557.0 665.3,559.7 666.5,560.9M656.8,560.6 658.7,560.7 662.4,560.7 664.8,561.2 666.5,560.9 668.1,561.0M664.5,561.5 664.5,564.5 663.7,564.5 663.7,566.9 663.7,569.9 661.6,570.1 660.7,570.0M663.7,566.9 664.3,568.5 666.2,567.3 668.2,567.6 669.4,566.0 671.5,564.7M668.1,561.0 668.7,562.5 670.1,563.3 671.5,564.7M668.1,561.0 669.5,561.1 671.1,559.5 672.3,559.2M672.3,559.2 673.1,559.5 674.4,560.1 674.5,562.0 674.1,564.0 673.1,564.9M671.5,564.7 673.1,564.9M673.1,564.9 673.7,566.6 673.7,568.5 674.4,568.6M673.7,568.5 672.8,568.9 672.8,567.7 673.7,567.7M669.5,570.9 670.8,570.0 671.5,570.8 670.5,571.7 669.5,570.9M672.3,559.2 672.2,558.5 674.7,557.9 674.4,556.2 674.8,555.2 674.4,554.0M675.8,555.8 676.0,557.5 676.8,559.5 676.3,560.5 675.6,559.4 674.7,557.9M675.5,520.1 676.1,521.6M639.7,511.3 640.2,511.2 641.5,511.3 641.8,511.6 641.2,512.6 641.2,513.1 640.8,513.2 641.2,514.4 640.8,515.2M645.5,510.0 647.6,510.5 649.6,510.9M653.2,509.7 652.8,509.3 652.8,508.0M652.8,508.0 652.0,507.7 653.2,506.5M652.8,508.0 654.5,507.9 655.7,507.4M655.7,507.4 655.0,506.6M653.2,506.5 655.0,506.6M653.2,506.5 653.8,505.4 652.2,505.0 651.0,504.5 649.1,503.6M652.2,505.0 652.1,504.4 652.0,503.6M649.8,503.4 652.0,503.6 652.8,502.6 653.0,501.8M654.2,500.5 655.2,500.5M658.8,501.3 659.2,502.5 659.5,503.7M659.5,503.7 657.2,504.3 658.5,505.6M659.5,503.7 661.2,504.3 662.7,505.0M658.5,505.6 661.1,505.7M661.1,505.7 662.7,505.0M658.5,505.6 657.8,506.6 655.7,506.7 655.0,506.6M655.7,507.4 657.2,507.0 658.4,507.5M658.4,507.5 660.4,507.2 661.2,506.2 661.1,505.7M661.2,506.2 662.7,506.4 665.4,505.9M662.7,505.0 665.8,505.3M665.8,505.3 665.4,505.9M665.8,505.3 667.0,504.1 666.7,503.3M666.7,503.3 666.6,501.3M666.6,501.3 666.0,500.9M663.5,500.9 666.0,500.9 665.8,500.4 664.7,500.1M658.4,507.5 658.4,508.1M658.3,508.3 659.8,508.3 660.7,507.5M660.7,507.5 662.8,508.0M662.8,508.0 663.9,507.8M663.9,507.8 664.7,507.5 666.1,506.2M666.1,506.2 667.8,506.5 669.2,506.0M669.2,506.0 670.5,507.5 670.5,508.3 671.8,508.5M665.9,509.4 667.8,509.8 669.5,509.5 670.8,509.8M663.9,507.8 664.9,508.7 665.9,509.4M665.9,509.4 665.7,511.0M665.7,511.0 666.2,511.8M666.2,511.8 668.8,511.6M668.8,511.6 670.3,511.2M668.8,511.6 668.7,512.2M663.7,513.1 664.5,512.2 666.2,511.8M663.2,511.3 664.1,511.0 664.5,512.2M664.1,511.0 665.7,511.0M664.1,511.0 663.9,510.4 663.0,510.0M662.8,508.0 662.8,508.8 663.2,509.5 663.0,510.0 662.4,510.8M660.2,508.5 661.2,508.5 662.8,508.8M660.2,508.5 660.5,509.4 661.7,510.4 662.4,510.8M656.3,497.0 657.2,495.4 657.2,493.7 658.7,492.5 659.5,491.0 660.8,489.5 664.1,488.7M667.2,491.4 666.6,490.0 664.1,488.7M664.1,488.7 668.2,488.7 668.7,487.9 670.2,487.8 671.2,488.5M671.2,488.5 672.7,488.0M671.2,488.5 671.2,490.0 672.0,491.5 671.8,492.9 673.2,493.9 670.2,495.8M670.3,496.6 669.8,498.3M667.2,498.0 669.8,498.3M669.8,498.3 670.5,499.5 669.2,499.8M664.5,499.5 667.4,499.3 669.2,499.8M669.2,499.8 668.4,501.0 666.6,501.3M670.5,499.5 672.8,499.9 673.2,501.4 674.1,501.8 673.5,502.8M673.5,502.8 672.4,503.5 669.5,503.2 666.7,503.3M673.5,502.8 675.3,503.5 676.6,504.2 678.7,504.6 680.4,504.9 680.2,506.3 678.9,507.0M669.2,506.0 671.3,506.3 672.0,507.5 670.5,508.3M640.9,500.4 640.3,500.9 641.8,501.1M681.6,511.6 683.2,512.0 684.3,513.1 684.0,514.5 684.3,515.2M684.3,515.2 682.3,515.3M682.3,515.3 680.3,515.5 678.7,515.5 677.6,516.0 677.0,516.3M680.3,510.0 682.8,510.7 684.9,510.8 685.8,511.3M685.8,511.3 687.4,511.3M685.8,511.3 684.5,511.8 683.2,512.0M684.5,511.8 685.8,513.8M684.3,513.1 685.8,513.8 687.0,513.3 687.8,514.2M682.3,515.3 681.2,517.5 679.3,518.4M679.3,518.4 677.7,519.3 676.8,519.0M676.9,517.4 677.5,517.7 676.8,518.5 676.2,518.6M676.7,519.0 676.6,520.0 676.2,521.6M676.2,521.7 677.1,521.9 678.2,521.2 678.7,520.8 677.8,520.0 679.7,519.4M679.7,519.4 679.3,518.4M679.7,519.4 680.7,519.6 682.1,520.3 684.2,521.9 685.8,522.0 686.6,522.4 687.3,522.5M685.8,522.0 686.5,521.1 687.0,521.2M687.4,521.2 686.8,520.4 686.8,519.1 685.3,518.7 684.8,517.9 685.3,516.5 684.3,515.2M682.7,532.5 683.2,531.6 684.8,531.8 686.2,532.0 687.2,531.0 687.9,530.7 690.3,530.4M690.3,530.4 691.2,532.4M690.3,530.4 692.8,529.5 693.4,527.9 693.0,527.3M693.0,527.3 690.8,527.1 690.0,526.0M693.0,527.3 693.5,526.0 694.0,525.5M689.3,525.5 689.7,525.7M691.9,515.1 693.7,514.5 694.8,514.5 696.4,515.0 698.0,515.7M698.0,515.7 697.5,517.6 697.8,520.0 698.5,520.4 697.8,521.4M697.8,521.4 699.3,522.7 699.7,523.9 698.3,525.2M697.8,521.4 700.3,521.7 702.2,521.3 703.2,520.1 704.8,519.6 705.3,518.3 706.3,517.5 706.6,516.0 709.4,515.2M698.0,516.5 699.5,516.7 700.8,516.0 702.4,515.0M702.4,515.0 703.5,515.2M703.5,515.2 704.9,514.9 706.2,514.2 706.6,515.5 709.4,515.2M703.8,526.5 706.2,525.9 705.3,524.1 705.5,522.9 707.4,522.0 708.7,520.8 709.1,519.5 709.7,519.1 708.7,517.3 711.8,516.6M711.8,516.6 712.8,518.5 712.7,520.2 714.6,521.0M714.6,521.0 717.0,522.1 718.7,522.9 720.4,523.0M714.6,521.0 713.8,522.2 715.3,523.0 717.6,523.5 720.4,524.1 720.4,523.0M720.4,523.0 721.0,523.5 721.8,522.7 723.7,523.0 723.7,523.9 721.8,524.0 721.0,523.5M723.7,523.0 725.3,521.9 727.0,521.7 728.1,522.7M728.1,522.7 726.3,524.5 725.5,526.2 724.8,526.2 724.8,527.9 724.2,528.3 723.9,529.0M721.2,527.9 720.5,525.8 720.7,524.3 721.8,524.5 721.9,525.2 724.0,525.4 723.0,526.5 723.9,527.2 723.9,529.0M728.1,522.7 729.2,523.3 729.2,525.0 728.3,526.2 729.3,526.2 729.5,527.9 731.3,528.3M730.4,529.2 728.7,530.0 728.2,530.8 729.4,532.6 728.8,533.7 729.7,535.8 730.0,536.4 729.2,537.9M731.3,528.3 730.4,529.2M730.4,529.2 731.3,530.0 731.2,531.6 732.1,531.0 733.7,531.0 734.3,532.5 735.0,534.1M735.0,534.1 732.8,534.4 732.3,535.0 732.8,536.5M732.1,527.5 732.8,528.9 734.4,529.5 733.7,530.0 734.7,530.8 735.8,532.0 736.6,533.5 736.6,534.0M736.6,534.0 736.6,535.8 735.3,536.5 735.2,537.0 734.1,537.5M735.0,534.1 736.6,534.0M737.0,528.3 735.9,527.2 734.8,526.8 732.8,527.5 732.1,527.5M732.1,527.5 731.3,528.3M730.4,540.9 731.2,541.5 732.1,541.0M738.3,544.5 739.5,545.4 741.2,545.0 742.7,544.4 743.5,542.6 745.0,542.7M742.1,542.4 742.8,542.6 743.1,542.0M764.5,548.4 764.5,553.8M750.4,554.0 751.2,554.0 751.2,553.5M720.2,505.2 723.7,503.9 728.8,502.9 732.2,503.5 732.2,504.2 736.2,504.5 739.1,505.2 742.4,504.4 744.2,504.7M744.2,504.7 743.7,506.2 745.8,506.3 746.8,507.3 744.8,507.5 741.7,508.9 740.2,508.7 739.8,510.0 738.2,510.8 734.5,511.5 731.0,510.7 727.3,510.6 726.4,509.4 722.8,508.5 722.4,506.6 720.3,505.8 720.2,505.2M744.2,504.7 746.8,502.5 747.8,501.8 751.2,502.0 753.2,504.5 755.8,505.5 756.2,506.5 759.2,506.0 757.8,508.7 756.4,510.0 755.9,511.0M750.7,512.9 752.8,511.4 753.8,511.2 755.2,510.5 755.9,511.0M752.6,514.7 754.0,514.0M688.0,507.6 686.2,506.2 686.2,504.6 687.4,504.5 689.3,503.1 691.6,503.5 693.4,504.0 695.8,503.7 697.0,503.9 698.3,502.0 698.7,501.2 702.0,500.6 704.5,500.1 706.2,501.0 708.2,501.2 711.0,500.9 711.9,501.8 713.7,503.9 716.5,503.7 718.1,504.9 719.8,505.2 720.2,505.2M719.8,505.2 718.7,505.9 718.4,506.9 716.2,506.9 715.6,508.3 713.7,508.7 713.9,510.4 713.8,511.1M713.8,511.1 710.3,510.5 708.2,510.4 706.2,511.0 706.1,511.0M706.1,511.0 703.7,512.0 702.4,511.9 702.0,510.4 697.8,509.2 695.8,508.2 693.7,508.7 693.7,511.8M693.7,511.8 692.0,511.0 690.8,511.5M693.7,511.8 694.5,511.8 695.8,510.6 697.0,511.0 697.2,511.9 698.6,512.0 699.1,512.9 700.5,513.8 702.4,515.0M713.8,511.1 711.1,512.0 708.7,512.9 708.4,513.4M708.4,513.4 709.4,514.2 709.4,515.2M708.4,513.4 706.8,513.5 704.9,513.1M704.9,513.1 703.7,513.8 703.5,515.2M704.9,513.1 705.8,512.1 707.8,512.4 706.1,511.0M709.4,515.2 711.8,516.6" fill="none" stroke="#9e4e46" stroke-width="1.1"/>
</g>
<rect x="497" y="471.3" width="300" height="149.8" fill="none" stroke="rgba(255,0,0,0.29)" stroke-width="4"/>
<path d="M647 540.3 V552.4 M641 546.5 H653" stroke="#ae4cdc" stroke-width="3" fill="none"/>
</svg>
<div class="btn" style="left:603px;top:636px;width:80px;height:25px;border-color:#3f9eec;background:linear-gradient(#fbfdff,#f1f6fc 50%,#e8f1fb);"></div>
<div class="btn" style="left:690px;top:636px;width:80px;height:25px;"></div>
<div class="btn" style="left:777px;top:636px;width:80px;height:25px;"></div>
<span class="t " style="left:634.8px;top:630.34px;font-size:12px;">OK</span>
<span class="t " style="left:711.2px;top:630.34px;font-size:12px;letter-spacing:0.15px;">Cancel</span>
<span class="t " style="left:803.5px;top:630.34px;font-size:12px;letter-spacing:0.4px;">Help</span>
<div style="left:596px;top:632px;width:93px;height:34px;border:3px solid #e8000c;"></div>
<svg style="left:0;top:0" width="865" height="674"><path d="M663.5 645.6 V661.2 L667.3 657.9 L670.1 663.7 L672.7 662.5 L670 657.1 H674.9 Z" fill="#fff" stroke="#0a0a14" stroke-width="1.15" stroke-linejoin="miter" stroke-miterlimit="2.4"/></svg>
</body></html>
